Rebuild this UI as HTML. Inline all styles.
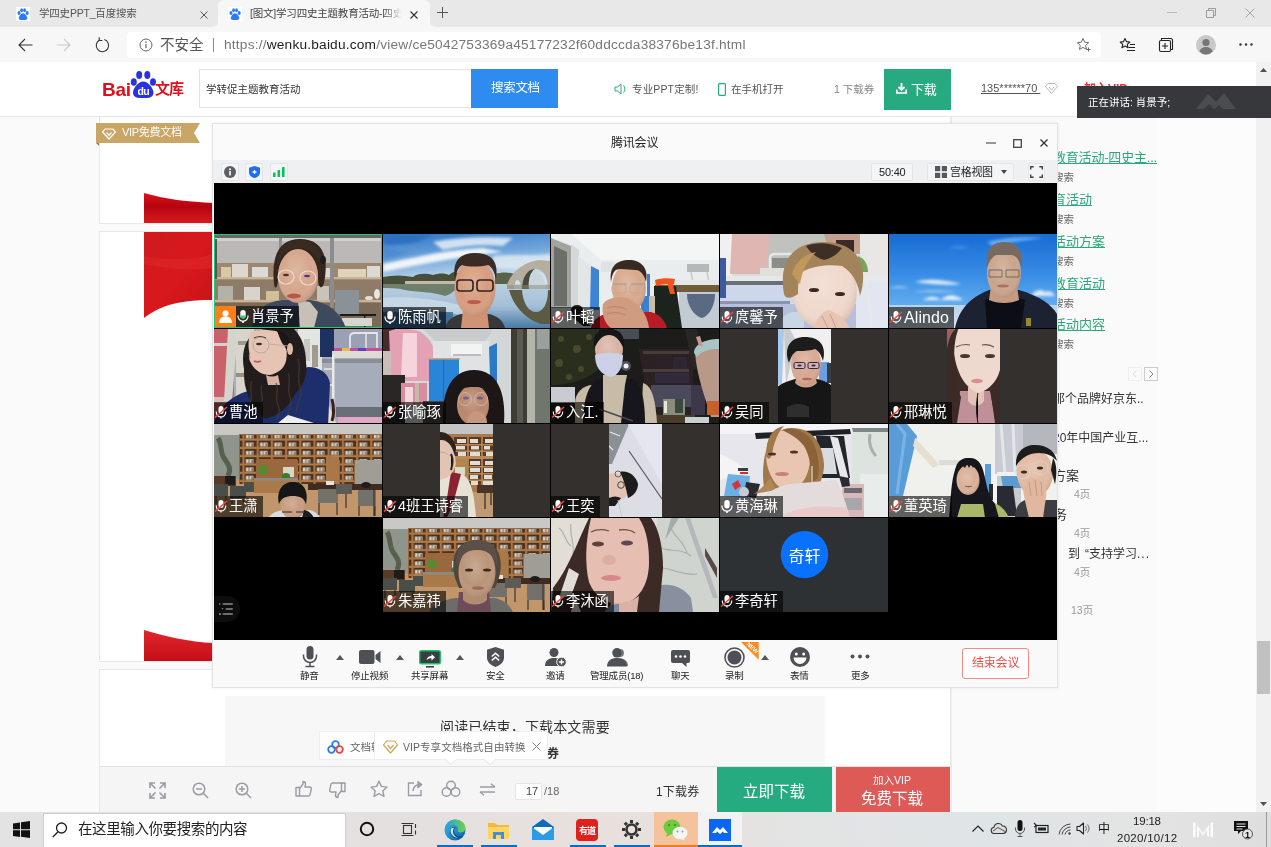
<!DOCTYPE html>
<html lang="zh-CN">
<head>
<meta charset="utf-8">
<title>腾讯会议</title>
<style>
*{box-sizing:border-box;margin:0;padding:0}
html,body{width:1271px;height:847px;overflow:hidden;background:#fafafa}
body{font-family:"Liberation Sans","Noto Sans CJK SC",sans-serif;color:#333;position:relative}
.abs{position:absolute}
.t{position:absolute;white-space:nowrap;line-height:1}
svg{position:absolute;overflow:visible}
#root{position:absolute;left:0;top:0;width:1271px;height:847px;overflow:hidden;will-change:transform}
</style>
</head>
<body>
<div id="root">
<!-- ===== Browser chrome ===== -->
<div class="abs" style="left:0;top:0;width:1271px;height:28px;background:#f7f7f7"></div>
<div class="abs" style="left:0;top:0;width:218px;height:27px;background:#e8e8e8;border-radius:0 0 5px 0"></div><div class="abs" style="left:430px;top:0;width:841px;height:27px;background:#e8e8e8;border-radius:0 0 0 5px"></div><div class="abs" style="left:214px;top:0;width:220px;height:10px;background:#e8e8e8"></div>
<div class="abs" style="left:218px;top:0;width:212px;height:28px;background:#f7f7f7;border-radius:6px 6px 0 0"></div>
<div class="abs" style="left:0;top:28px;width:1271px;height:34px;background:#f7f7f7"></div>
<!-- favicons (baidu paw) -->
<svg style="left:16px;top:7px" width="14" height="14" viewBox="0 0 14 14"><rect width="14" height="14" fill="#fff"/><g fill="#2a7afc"><ellipse cx="3" cy="6" rx="1.5" ry="2"/><ellipse cx="5.6" cy="3.2" rx="1.4" ry="2"/><ellipse cx="8.6" cy="3.2" rx="1.4" ry="2"/><ellipse cx="11.2" cy="6" rx="1.5" ry="2"/><path d="M7 6.2c2 0 4.2 3 4.2 5 0 1.600-1.600 1.800-4.200 1.800s-4.200-.2-4.200-1.800c0-2 2.200-5 4.200-5z"/></g></svg>
<svg style="left:228px;top:7px" width="14" height="14" viewBox="0 0 14 14"><rect width="14" height="14" fill="#fff"/><g fill="#2a7afc"><ellipse cx="3" cy="6" rx="1.5" ry="2"/><ellipse cx="5.6" cy="3.2" rx="1.4" ry="2"/><ellipse cx="8.6" cy="3.2" rx="1.4" ry="2"/><ellipse cx="11.2" cy="6" rx="1.5" ry="2"/><path d="M7 6.2c2 0 4.2 3 4.2 5 0 1.600-1.600 1.800-4.200 1.800s-4.200-.2-4.200-1.800c0-2 2.200-5 4.200-5z"/></g></svg>
<div class="t" style="left:39px;top:8px;font-size:10.500px;color:#555;letter-spacing:-0.2px">学四史PPT_百度搜索</div>
<div class="t" style="left:250px;top:8px;font-size:10.500px;color:#444;letter-spacing:-0.2px;width:152px;overflow:hidden;-webkit-mask-image:linear-gradient(90deg,#000 88%,transparent)">[图文]学习四史主题教育活动-四史</div>
<svg style="left:200px;top:11px" width="8" height="8" viewBox="0 0 8 8"><path d="M.5.5l7 7M7.500.5l-7 7" stroke="#555" stroke-width="1" fill="none"/></svg>
<svg style="left:410px;top:11px" width="8" height="8" viewBox="0 0 8 8"><path d="M.5.5l7 7M7.500.5l-7 7" stroke="#333" stroke-width="1.100" fill="none"/></svg>
<svg style="left:437px;top:7px" width="11" height="11" viewBox="0 0 11 11"><path d="M5.500 0v11M0 5.500h11" stroke="#555" stroke-width="1" fill="none"/></svg>
<!-- window controls -->
<svg style="left:1167px;top:12px" width="10" height="2" viewBox="0 0 10 2"><path d="M0 .5h10" stroke="#bbb" stroke-width="1"/></svg>
<svg style="left:1206px;top:8px" width="10" height="10" viewBox="0 0 10 10"><path d="M.5 2.500h7v7h-7zM2.500 2.500v-2h7v7h-2" stroke="#9a9a9a" stroke-width="1" fill="none"/></svg>
<svg style="left:1245px;top:8px" width="10" height="10" viewBox="0 0 10 10"><path d="M.5.5l9 9M9.500.5l-9 9" stroke="#a4a4a4" stroke-width="1" fill="none"/></svg>
<!-- nav buttons -->
<svg style="left:18px;top:38px" width="15" height="14" viewBox="0 0 15 14"><path d="M14.500 7H1M7 1L1 7l6 6" stroke="#333" stroke-width="1.100" fill="none"/></svg>
<svg style="left:56px;top:38px" width="15" height="14" viewBox="0 0 15 14"><path d="M.5 7H14M8 1l6 6-6 6" stroke="#cacaca" stroke-width="1.100" fill="none"/></svg>
<svg style="left:95px;top:37px" width="15" height="16" viewBox="0 0 15 16"><path d="M9.300 2.600A6.200 6.200 0 1 1 4.600 3" stroke="#333" stroke-width="1.100" fill="none"/><path d="M4.200.3v3.200h3.200" stroke="#333" stroke-width="1.100" fill="none"/></svg>
<!-- address box -->
<div class="abs" style="left:127px;top:32px;width:974px;height:26px;background:#fff;border-radius:4px"></div>
<svg style="left:139px;top:38px" width="14" height="14" viewBox="0 0 14 14"><circle cx="7" cy="7" r="6" stroke="#666" stroke-width="1" fill="none"/><path d="M7 6v4" stroke="#666" stroke-width="1.200"/><circle cx="7" cy="4.100" r=".8" fill="#666"/></svg>
<div class="t" style="left:160px;top:38px;font-size:14.500px;color:#555">不安全</div>
<div class="abs" style="left:212.500px;top:38px;width:1.500px;height:14px;background:#8c8c8c"></div>
<div class="t" style="left:224px;top:38px;font-size:13.700px;color:#777;letter-spacing:0.2px">https://<span style="color:#222">wenku.baidu.com</span>/view/ce5042753369a45177232f60ddccda38376be13f.html</div>
<!-- right toolbar icons -->
<svg style="left:1076px;top:37px" width="16" height="16" viewBox="0 0 16 16"><path d="M7 1.500l1.700 3.700 4 .5-3 2.700.8 4L7 10.400l-3.500 2 .8-4-3-2.700 4-.5z" stroke="#6a6a6a" stroke-width="1" fill="none" stroke-linejoin="round"/><path d="M12.500 10.500v4M10.500 12.500h4" stroke="#6a6a6a" stroke-width="1"/></svg>
<svg style="left:1119px;top:37px" width="17" height="16" viewBox="0 0 17 16"><path d="M6 1.500l1.400 3.100 3.400.4-2.500 2.300.7 3.400L6 9l-3 1.700.7-3.400L1.200 5l3.400-.4z" stroke="#222" stroke-width="1.100" fill="none" stroke-linejoin="round"/><path d="M11 7.500h5M9.500 10.500h6.500M8 13.500h8" stroke="#222" stroke-width="1.100"/></svg>
<svg style="left:1158px;top:37px" width="16" height="16" viewBox="0 0 16 16"><path d="M3.500 3.500v-2h9a2 2 0 0 1 2 2v9h-2" stroke="#222" stroke-width="1.100" fill="none"/><rect x="1.500" y="3.500" width="11" height="11" rx="1.500" stroke="#222" stroke-width="1.100" fill="none"/><path d="M7 6v6M4 9h6" stroke="#222" stroke-width="1.100"/></svg>
<svg style="left:1196px;top:35px" width="20" height="20" viewBox="0 0 20 20"><circle cx="10" cy="10" r="10" fill="#c9c9c9"/><circle cx="10" cy="7.500" r="3.600" fill="#777"/><path d="M3.500 16.500c1-3.500 4-4.500 6.500-4.500s5.500 1 6.500 4.500A9.500 9.500 0 0 1 10 19.500a9.500 9.500 0 0 1-6.500-3z" fill="#777"/></svg>
<svg style="left:1239px;top:43px" width="14" height="3" viewBox="0 0 14 3"><circle cx="1.500" cy="1.500" r="1.200" fill="#333"/><circle cx="7" cy="1.500" r="1.200" fill="#333"/><circle cx="12.500" cy="1.500" r="1.200" fill="#333"/></svg>
<!-- ===== Page ===== -->
<div class="abs" style="left:0;top:62px;width:1256px;height:750px;background:#fafafa"></div>
<div class="abs" style="left:951px;top:116px;width:206px;height:696px;background:#fafafa;border-left:1px solid #ececec"></div>
<div class="abs" style="left:1157px;top:116px;width:99px;height:696px;background:#fcfcfc"></div>
<!-- header -->
<div class="abs" style="left:0;top:62px;width:1256px;height:55px;background:#fff;border-bottom:1px solid #e6e6e6"></div>
<!-- baidu logo -->
<div class="t" style="left:102px;top:80px;font-size:19px;font-weight:bold;color:#e10f1b;letter-spacing:-0.3px">Bai</div>
<svg style="left:130px;top:70px" width="27" height="29" viewBox="0 0 27 29"><g fill="#2932e1"><ellipse cx="3.800" cy="12" rx="3" ry="3.800"/><ellipse cx="9.200" cy="5" rx="3" ry="4"/><ellipse cx="17.300" cy="5" rx="3" ry="4"/><ellipse cx="23" cy="12" rx="3" ry="3.800"/><path d="M13.300 11.500c4.500 0 10.200 6.500 10.200 11.200 0 4.800-4.500 5.300-10.200 5.300S3 27.500 3 22.700c0-4.700 5.800-11.200 10.300-11.200z"/></g><text x="13.300" y="24.500" font-size="10.500" font-weight="bold" fill="#fff" text-anchor="middle" font-family="Liberation Sans,sans-serif" letter-spacing="-0.5">du</text></svg>
<div class="t" style="left:155px;top:81px;font-size:15px;font-weight:bold;color:#e10f1b;letter-spacing:-1px">文库</div>
<!-- search -->
<div class="abs" style="left:199px;top:69px;width:273px;height:39px;background:#fff;border:1px solid #e3e3e3"></div>
<div class="t" style="left:206px;top:84px;font-size:10.500px;color:#333">学转促主题教育活动</div>
<div class="abs" style="left:471px;top:69px;width:87px;height:39px;background:#2e8cf0"></div>
<div class="t" style="left:491px;top:82px;font-size:12.500px;color:#fff;letter-spacing:-0.3px">搜索文档</div>
<!-- header right -->
<svg style="left:614px;top:83px" width="14" height="12" viewBox="0 0 14 12"><path d="M1 4h2.500L7 1v10L3.500 8H1z" stroke="#29a97f" stroke-width="1" fill="none" stroke-linejoin="round"/><path d="M9.500 2.500a5 5 0 0 1 0 7" stroke="#29a97f" stroke-width="1" fill="none"/></svg>
<div class="t" style="left:632px;top:84px;font-size:10.500px;color:#555;letter-spacing:0.15px">专业PPT定制!</div>
<svg style="left:718px;top:83px" width="8" height="13" viewBox="0 0 8 13"><rect x=".6" y=".6" width="6.800" height="11.800" rx="1" stroke="#29a97f" stroke-width="1.200" fill="none"/></svg>
<div class="t" style="left:731px;top:84px;font-size:10.500px;color:#555">在手机打开</div>
<div class="t" style="left:834px;top:84px;font-size:10.500px;color:#888">1 下载券</div>
<div class="abs" style="left:884px;top:69px;width:67px;height:41px;background:#27aa80"></div>
<svg style="left:896px;top:83px" width="11" height="11" viewBox="0 0 11 11"><path d="M5.500 0v6M2.500 4l3 3 3-3" stroke="#fff" stroke-width="1.800" fill="none"/><path d="M.8 6.500v3.500h9.400V6.500" stroke="#fff" stroke-width="1.600" fill="none"/></svg>
<div class="t" style="left:911px;top:83px;font-size:13px;color:#fff;letter-spacing:-0.3px">下载</div>
<div class="t" style="left:981px;top:83px;font-size:11px;color:#555;text-decoration:underline">135******70&nbsp;</div>
<svg style="left:1045px;top:83px" width="13" height="11" viewBox="0 0 13 11"><path d="M3 .5h7l2.500 3-6 7-6-7z" stroke="#bbb" stroke-width="1" fill="none"/><path d="M4 4l2.500 3L9 4" stroke="#bbb" stroke-width="1" fill="none"/></svg>
<div class="t" style="left:1084px;top:83px;font-size:12px;font-weight:bold;color:#e4393c">加入VIP</div>
<!-- scrollbar -->
<div class="abs" style="left:1256px;top:62px;width:15px;height:750px;background:#f1f1f1"></div>
<div class="abs" style="left:1257px;top:641px;width:13px;height:53px;background:#c1c1c1"></div>
<svg style="left:1260px;top:68px" width="7" height="4" viewBox="0 0 7 4"><path d="M0 4l3.500-4L7 4z" fill="#505050"/></svg>
<svg style="left:1260px;top:802px" width="7" height="4" viewBox="0 0 7 4"><path d="M0 0l3.500 4L7 0z" fill="#505050"/></svg>
<!-- doc pages -->
<div class="abs" style="left:99px;top:117px;width:852px;height:107px;background:#fff;border:1px solid #e8e8e8;border-top:none"></div>
<div class="abs" style="left:99px;top:231px;width:852px;height:431px;background:#fff;border:1px solid #e8e8e8"></div>
<div class="abs" style="left:99px;top:669px;width:852px;height:143px;background:#fff;border:1px solid #e8e8e8;border-bottom:none"></div>
<!-- VIP ribbon -->
<svg style="left:96px;top:123px" width="105" height="23" viewBox="0 0 105 23"><path d="M0 20l3 3v-3z" fill="#9b7a3d"/><path d="M0 0h104l-6 10 6 10H0z" fill="#c9a666"/><path d="M9 6h8l2.500 3-6.500 7-6.500-7z" stroke="#fff" stroke-width="1.200" fill="none"/><path d="M10.500 9.500l2.500 2.800 2.500-2.800" stroke="#fff" stroke-width="1.200" fill="none"/></svg>
<div class="t" style="left:122px;top:127px;font-size:11px;color:#fff;letter-spacing:-0.3px">VIP免费文档</div>
<!-- red flag pieces -->
<svg style="left:144px;top:193px" width="70" height="30" viewBox="0 0 70 30"><defs><linearGradient id="rf1" x1="0" y1="0" x2="0" y2="1"><stop offset="0" stop-color="#e01018"/><stop offset=".45" stop-color="#b40410"/><stop offset="1" stop-color="#d81a20"/></linearGradient></defs><path d="M0 0c20 6 45 9 70 10v20H0z" fill="url(#rf1)"/></svg>
<svg style="left:144px;top:232px" width="70" height="88" viewBox="0 0 70 88"><defs><linearGradient id="rf2" x1="0" y1="0" x2="1" y2="1"><stop offset="0" stop-color="#cf1a1e"/><stop offset=".5" stop-color="#d8181c"/><stop offset="1" stop-color="#c41418"/></linearGradient></defs><path d="M0 0h70v68c-25 0-50 2-70 18z" fill="url(#rf2)"/><path d="M0 24c25 5 50 4 70-2v14c-25 4-50 0-70-4z" fill="#e02a2a" opacity=".5"/></svg>
<svg style="left:144px;top:630px" width="70" height="31" viewBox="0 0 70 31"><defs><linearGradient id="rf3" x1="0" y1="0" x2="0" y2="1"><stop offset="0" stop-color="#e2262c"/><stop offset="1" stop-color="#c40e18"/></linearGradient></defs><path d="M0 0c20 6 45 12 70 13v18H0z" fill="url(#rf3)"/></svg>
<!-- sidebar links -->
<div class="t" style="left:1053px;top:151px;font-size:13px;color:#2aa97f;text-decoration:underline;letter-spacing:-0.2px">教育活动-四史主...</div>
<div class="t" style="left:1053px;top:172px;font-size:10.500px;color:#666">搜索</div>
<div class="t" style="left:1053px;top:193px;font-size:13px;color:#2aa97f;text-decoration:underline;letter-spacing:0px">育活动</div>
<div class="t" style="left:1053px;top:214px;font-size:10.500px;color:#666">搜索</div>
<div class="t" style="left:1053px;top:235px;font-size:13px;color:#2aa97f;text-decoration:underline;letter-spacing:0px">活动方案</div>
<div class="t" style="left:1053px;top:256px;font-size:10.500px;color:#666">搜索</div>
<div class="t" style="left:1053px;top:277px;font-size:13px;color:#2aa97f;text-decoration:underline;letter-spacing:0px">教育活动</div>
<div class="t" style="left:1053px;top:298px;font-size:10.500px;color:#666">搜索</div>
<div class="t" style="left:1053px;top:318px;font-size:13px;color:#2aa97f;text-decoration:underline;letter-spacing:0px">活动内容</div>
<div class="t" style="left:1053px;top:339px;font-size:10.500px;color:#666">搜索</div>
<div class="abs" style="left:1128px;top:367px;width:14px;height:14px;border:1px solid #eee;background:#fafafa"></div>
<div class="abs" style="left:1144px;top:367px;width:14px;height:14px;border:1px solid #ccc;background:#fafafa"></div>
<svg style="left:1132px;top:370px" width="5" height="8" viewBox="0 0 5 8"><path d="M4.500.5L1 4l3.500 3.500" stroke="#ddd" stroke-width="1" fill="none"/></svg>
<svg style="left:1149px;top:370px" width="5" height="8" viewBox="0 0 5 8"><path d="M.5.5L4 4 .5 7.500" stroke="#888" stroke-width="1" fill="none"/></svg>
<div class="t" style="left:1053px;top:393px;font-size:12px;color:#333">那个品牌好京东..</div>
<div class="t" style="left:1053px;top:432px;font-size:12px;color:#333">20年中国产业互...</div>
<div class="t" style="left:1053px;top:469px;font-size:13px;color:#333">方案</div>
<div class="t" style="left:1074px;top:489px;font-size:10.500px;color:#999">4页</div>
<div class="t" style="left:1054px;top:508px;font-size:13px;color:#333">务</div>
<div class="t" style="left:1074px;top:528px;font-size:10.500px;color:#999">4页</div>
<div class="t" style="left:1068px;top:548px;font-size:12px;color:#333">到<span style="margin-left:5px">“</span>支持学习<span style="letter-spacing:1px">...</span></div>
<div class="t" style="left:1074px;top:567px;font-size:10.500px;color:#999">4页</div>
<div class="t" style="left:1071px;top:605px;font-size:10.500px;color:#999">13页</div>
<!-- reading end box -->
<div class="abs" style="left:225px;top:696px;width:600px;height:72px;background:#f7f7f7"></div>
<div class="t" style="left:440px;top:720px;font-size:14px;color:#333;letter-spacing:0.15px">阅读已结束，下载本文需要</div>
<div class="t" style="left:547px;top:748px;font-size:12px;font-weight:bold;color:#333">券</div>
<!-- popups -->
<div class="abs" style="left:319px;top:731px;width:97px;height:29px;background:#fff;border:1px solid #eee"></div>
<svg style="left:327px;top:740px" width="17" height="14" viewBox="0 0 17 14"><circle cx="8.500" cy="4.500" r="3.300" stroke="#2b7de9" stroke-width="1.800" fill="none"/><circle cx="4.500" cy="9.500" r="3.300" stroke="#2b7de9" stroke-width="1.800" fill="none"/><circle cx="12.500" cy="9.500" r="3.300" stroke="#e8443a" stroke-width="1.800" fill="none"/></svg>
<div class="t" style="left:350px;top:742px;font-size:10.500px;color:#666">文档转换</div>
<div class="abs" style="left:374px;top:731px;width:174px;height:29px;background:#fff;border:1px solid #eee"></div>
<svg style="left:383px;top:740px" width="15" height="14" viewBox="0 0 15 14"><path d="M3.500 1h8l3 4-7 8-7-8z" stroke="#d5a556" stroke-width="1.200" fill="none" stroke-linejoin="round"/><path d="M4.500 5l3 3.500 3-3.500" stroke="#d5a556" stroke-width="1.200" fill="none"/></svg>
<div class="t" style="left:403px;top:742px;font-size:10.500px;color:#666;letter-spacing:0.05px">VIP专享文档格式自由转换</div>
<svg style="left:532px;top:742px" width="9" height="9" viewBox="0 0 9 9"><path d="M.5.5l8 8M8.500.5l-8 8" stroke="#888" stroke-width="1" fill="none"/></svg>
<!-- ===== Doc bottom bar ===== -->
<div class="abs" style="left:99px;top:766px;width:852px;height:46px;background:#f5f5f5;border-top:1px solid #e2e2e2;border-left:1px solid #e8e8e8"></div>
<svg style="left:149px;top:782px" width="17" height="17" viewBox="0 0 17 17"><g stroke="#9a9ba3" stroke-width="1.600" fill="none"><path d="M1 6V1h5M1 1l5.500 5.500M16 6V1h-5M16 1l-5.500 5.500M1 11v5h5M1 16l5.500-5.500M16 11v5h-5M16 16l-5.500-5.500"/></g></svg>
<svg style="left:192px;top:782px" width="17" height="17" viewBox="0 0 17 17"><g stroke="#9a9ba3" stroke-width="1.500" fill="none"><circle cx="7" cy="7" r="5.800"/><path d="M11.300 11.300L16 16M4 7h6"/></g></svg>
<svg style="left:235px;top:782px" width="17" height="17" viewBox="0 0 17 17"><g stroke="#9a9ba3" stroke-width="1.500" fill="none"><circle cx="7" cy="7" r="5.800"/><path d="M11.300 11.300L16 16M4 7h6M7 4v6"/></g></svg>
<svg style="left:295px;top:780px" width="18" height="17" viewBox="0 0 18 17"><g stroke="#9a9ba3" stroke-width="1.400" fill="none" stroke-linejoin="round"><path d="M1 7.500h3.500v8.500H1z"/><path d="M4.500 8.500l3.500-4.500V1.500c1.800 0 2.500 1.200 2.500 2.500l-.5 3h5c1 0 1.500.8 1.300 1.800l-1.300 6c-.2.800-.8 1.200-1.500 1.200H4.500"/></g></svg>
<svg style="left:328px;top:782px" width="18" height="17" viewBox="0 0 18 17"><g stroke="#9a9ba3" stroke-width="1.400" fill="none" stroke-linejoin="round" transform="rotate(180 9 8.500)"><path d="M1 7.500h3.500v8.500H1z"/><path d="M4.500 8.500l3.500-4.500V1.500c1.800 0 2.500 1.200 2.500 2.500l-.5 3h5c1 0 1.500.8 1.300 1.800l-1.300 6c-.2.800-.8 1.200-1.500 1.200H4.500"/></g></svg>
<svg style="left:370px;top:780px" width="18" height="18" viewBox="0 0 18 18"><path d="M9 1.200l2.400 5.200 5.600.7-4.200 3.800 1.200 5.600L9 13.700l-5 2.800 1.200-5.600L1 7.100l5.600-.7z" stroke="#9a9ba3" stroke-width="1.400" fill="none" stroke-linejoin="round"/></svg>
<svg style="left:407px;top:780px" width="17" height="17" viewBox="0 0 17 17"><g stroke="#9a9ba3" stroke-width="1.400" fill="none"><path d="M7 3H1.500v12.500H14V10"/><path d="M6 11c.5-4 3-6.500 7-6.500M10.500 1.500L14.500 4.500 10.500 8" stroke-linejoin="round"/></g><path d="M10.500 1l5 3.500-5 3.500z" fill="#9a9ba3"/></svg>
<svg style="left:441px;top:780px" width="20" height="18" viewBox="0 0 20 18"><g stroke="#9a9ba3" stroke-width="1.400" fill="none"><circle cx="10" cy="5.500" r="4.300"/><circle cx="5.500" cy="12" r="4.300"/><circle cx="14.500" cy="12" r="4.300"/></g></svg>
<svg style="left:479px;top:783px" width="17" height="13" viewBox="0 0 17 13"><g stroke="#9a9ba3" stroke-width="1.400" fill="none"><path d="M1 4h15M12 .8L16 4"/><path d="M16 9H1M5 12.200L1 9"/></g></svg>
<div class="abs" style="left:515px;top:783px;width:27px;height:17px;background:#fff;border:1px solid #e4e4e4;border-radius:2px"></div>
<div class="t" style="left:526px;top:786px;font-size:11px;color:#444">17</div>
<div class="t" style="left:544px;top:786px;font-size:11px;color:#666">/18</div>
<div class="t" style="left:656px;top:786px;font-size:12px;color:#333;letter-spacing:0.2px">1下载券</div>
<div class="abs" style="left:717px;top:767px;width:115px;height:45px;background:#26ab80"></div>
<div class="t" style="left:743px;top:784px;font-size:15.500px;color:#fff">立即下载</div>
<div class="abs" style="left:836px;top:767px;width:114px;height:45px;background:#dd5a57"></div>
<div class="t" style="left:873px;top:775px;font-size:10.500px;color:#fff">加入VIP</div>
<div class="t" style="left:861px;top:791px;font-size:15.500px;color:#fff">免费下载</div>
<!-- popup carets -->
<svg style="left:445px;top:759px" width="12" height="6" viewBox="0 0 12 6"><path d="M0 0l6 5.500L12 0" stroke="#e6e6e6" fill="#fff"/></svg>
<svg style="left:484px;top:759px" width="12" height="6" viewBox="0 0 12 6"><path d="M0 0l6 5.500L12 0" stroke="#e6e6e6" fill="#fff"/></svg>
<!-- ===== Windows taskbar ===== -->
<div class="abs" style="left:0;top:812px;width:1271px;height:35px;background:linear-gradient(90deg,#e3e3e4 0%,#e4e0e0 30%,#e8e0dc 52%,#e4e4e4 62%,#dfe4e6 78%,#e4e4e4 90%,#dedede 100%)"></div>
<svg style="left:13px;top:821px" width="17" height="17" viewBox="0 0 17 17"><path d="M0 2.400l7-1v6.800H0zM8 1.300L17 0v8.200H8zM0 9.200h7V16l-7-1zM8 9.200h9V17l-9-1.300z" fill="#111"/></svg>
<div class="abs" style="left:43px;top:813px;width:303px;height:34px;background:#fff;border:1px solid #d0d0d0;border-bottom:none"></div>
<svg style="left:52px;top:822px" width="16" height="16" viewBox="0 0 16 16"><circle cx="9.500" cy="6" r="5" stroke="#222" stroke-width="1.300" fill="none"/><path d="M6 9.800L.8 15" stroke="#222" stroke-width="1.300"/></svg>
<div class="t" style="left:78px;top:822px;font-size:14.500px;color:#222;letter-spacing:-0.4px">在这里输入你要搜索的内容</div>
<svg style="left:359px;top:821px" width="16" height="16" viewBox="0 0 16 16"><circle cx="8" cy="8" r="6.200" stroke="#111" stroke-width="2" fill="none"/></svg>
<svg style="left:401px;top:822px" width="17" height="15" viewBox="0 0 17 15"><g stroke="#333" stroke-width="1.100" fill="none"><rect x="2.500" y="3.500" width="8" height="8"/><path d="M.5 1.500h12M.5 13.500h12M14.500 2v4M14.500 8.500v4"/></g></svg>
<!-- edge -->
<svg style="left:444px;top:819px" width="22" height="22" viewBox="0 0 22 22"><defs><linearGradient id="eg1" x1="0" y1="0" x2="1" y2="1"><stop offset="0" stop-color="#35c1f1"/><stop offset="1" stop-color="#0c59a4"/></linearGradient><linearGradient id="eg2" x1="0" y1="0" x2="1" y2="0"><stop offset="0" stop-color="#2c9ddb"/><stop offset="1" stop-color="#6ad34a"/></linearGradient></defs><circle cx="11" cy="11" r="10.500" fill="url(#eg1)"/><path d="M1 10C2 4 6.500.5 11 .5c6 0 10.500 4 10.500 8.500 0 3-2.500 4.500-5 4.500-2 0-3-1-3-2 0-.6.500-1 .5-2 0-1.500-1.500-3.500-4.500-3.500C5.500 6 2 8 1 10z" fill="url(#eg2)"/><path d="M8 8.500c-2 1.500-2.500 4-1.500 6.500 1.200 3 4.500 5 8 4.500 2-.3 4-1.500 5-3-1.500 1-4 1.500-6 .5-2.500-1.200-4-3.500-3.500-6 .2-1 .8-1.800 1.500-2.500z" fill="#0b4f94"/><path d="M7.500 9c-1.500 2-1.200 5 1 7.500 1.500 1.600 3.500 2.500 6 2.500-3.500-1-6-4-5.500-7.500.1-1 .5-1.800 1-2.500z" fill="#e8f4fb" opacity=".9"/></svg>
<!-- explorer -->
<svg style="left:487px;top:820px" width="23" height="20" viewBox="0 0 23 20"><path d="M1 3h7l2 2h12v13H1z" fill="#f5b93b"/><path d="M1 7h21v12H1z" fill="#fcd663"/><path d="M6 12h11v7H6z" fill="#3a8ee6"/><path d="M9 15h5v4H9z" fill="#fcd663"/></svg>
<!-- mail -->
<svg style="left:532px;top:819px" width="22" height="21" viewBox="0 0 22 21"><path d="M0 8L11 0l11 8v13H0z" fill="#0f6cbd"/><path d="M2 8h18v8H2z" fill="#fff"/><path d="M0 8l11 8 11-8v13H0z" fill="#2b9be8"/></svg>
<!-- youdao -->
<svg style="left:576px;top:819px" width="22" height="22" viewBox="0 0 22 22"><rect width="22" height="22" rx="4" fill="#e0201c"/><text x="11" y="15" font-size="9" font-weight="bold" fill="#fff" text-anchor="middle" font-family="Noto Sans CJK SC,sans-serif" letter-spacing="-1">有道</text></svg>
<!-- settings gear -->
<svg style="left:621px;top:819px" width="21" height="21" viewBox="0 0 21 21"><g fill="none" stroke="#333"><circle cx="10.500" cy="10.500" r="5" stroke-width="2.600"/><g stroke-width="3"><path d="M10.500 1v3M10.500 17v3M1 10.500h3M17 10.500h3M3.800 3.800l2.100 2.100M15.100 15.100l2.100 2.100M3.800 17.200l2.100-2.100M15.100 5.900l2.100-2.100"/></g></g></svg>
<!-- wechat -->
<div class="abs" style="left:654px;top:812px;width:44px;height:35px;background:#f5c39b"></div>
<svg style="left:663px;top:819px" width="25" height="21" viewBox="0 0 25 21"><ellipse cx="9" cy="8" rx="8.500" ry="7.500" fill="#6ccb3f"/><path d="M4 14l-1 4 4.500-2.500z" fill="#6ccb3f"/><ellipse cx="17" cy="14" rx="7.500" ry="6.300" fill="#f4f4f4"/><path d="M21 19l1 2.500-4-1.500z" fill="#f4f4f4"/><circle cx="6" cy="6" r="1" fill="#3b8a1c"/><circle cx="12" cy="6" r="1" fill="#3b8a1c"/><circle cx="14.500" cy="12.500" r=".9" fill="#999"/><circle cx="19.500" cy="12.500" r=".9" fill="#999"/></svg>
<!-- tencent meeting -->
<div class="abs" style="left:698px;top:812px;width:44px;height:35px;background:#f2f2f4"></div>
<svg style="left:709px;top:819px" width="22" height="22" viewBox="0 0 22 22"><rect width="22" height="22" fill="#0a66f5"/><path d="M3 14l5-6 3 3 3-3 5 6h-4l-1-1.500-3 2.500-3-2.500L7 14z" fill="#fff"/></svg>
<!-- underlines -->
<div class="abs" style="left:437px;top:845px;width:36px;height:2px;background:#0a6cd1"></div>
<div class="abs" style="left:481px;top:845px;width:36px;height:2px;background:#0a6cd1"></div>
<div class="abs" style="left:570px;top:845px;width:36px;height:2px;background:#0a6cd1"></div>
<div class="abs" style="left:614px;top:845px;width:36px;height:2px;background:#0a6cd1"></div>
<div class="abs" style="left:654px;top:845px;width:44px;height:2px;background:#f07c1c"></div>
<div class="abs" style="left:698px;top:845px;width:44px;height:2px;background:#0a6cd1"></div>
<!-- tray -->
<svg style="left:972px;top:825px" width="12" height="7" viewBox="0 0 12 7"><path d="M.5 6.500L6 1l5.500 5.500" stroke="#222" stroke-width="1.200" fill="none"/></svg>
<svg style="left:991px;top:823px" width="16" height="11" viewBox="0 0 16 11"><path d="M3.500 10.500a3 3 0 0 1-.5-6A4.500 4.500 0 0 1 11.500 3a3.800 3.800 0 0 1 1 7.500z" stroke="#333" stroke-width="1.100" fill="#ddd"/><path d="M2 8l5-3.500 7 4" stroke="#333" stroke-width=".8" fill="none"/></svg>
<svg style="left:1015px;top:820px" width="10" height="17" viewBox="0 0 10 17"><rect x="2.500" y="0" width="5" height="11" rx="2.500" fill="#111"/><path d="M.5 7.500v1.500a4.500 4.500 0 0 0 9 0V7.500M5 13.500V16M2.500 16.500h5" stroke="#555" stroke-width="1" fill="none"/></svg>
<svg style="left:1033px;top:822px" width="16" height="12" viewBox="0 0 16 12"><rect x="3" y="3.500" width="12" height="7" stroke="#222" stroke-width="1.200" fill="none"/><rect x="5" y="5.500" width="8" height="3" fill="#222"/><path d="M1 1l3 3M1 5l2-1" stroke="#222" stroke-width="1.100"/></svg>
<svg style="left:1058px;top:823px" width="14" height="12" viewBox="0 0 14 12"><g stroke="#444" stroke-width="1" fill="none"><path d="M1 11.500A12 12 0 0 1 12.500 1"/><path d="M4 11.500A9 9 0 0 1 12.500 4"/><path d="M7 11.500A6 6 0 0 1 12.500 7"/></g><circle cx="11.500" cy="10.500" r="1.200" fill="#444"/></svg>
<svg style="left:1076px;top:822px" width="16" height="13" viewBox="0 0 16 13"><path d="M1 4.500h2.500L7.500 1v11L3.500 8.500H1z" stroke="#222" stroke-width="1.100" fill="none" stroke-linejoin="round"/><path d="M9.500 4a4 4 0 0 1 0 5M11.500 2.500a6.500 6.500 0 0 1 0 8" stroke="#666" stroke-width="1" fill="none"/></svg>
<div class="t" style="left:1098px;top:823px;font-size:12px;color:#111">中</div>
<div class="t" style="left:1133px;top:816px;font-size:11.500px;color:#222;letter-spacing:-0.2px">19:18</div>
<div class="t" style="left:1117px;top:833px;font-size:11.500px;color:#222;letter-spacing:0.28px">2020/10/12</div>
<svg style="left:1193px;top:822px" width="20" height="15" viewBox="0 0 20 15"><path d="M0 0l2.500 1v14H0zM4 3l6 8 6-8v12l-2-1V8l-4 5.500L6 8v7H4zM17.500 1L20 0v15h-2.500z" fill="#fbfbfb"/></svg>
<svg style="left:1234px;top:821px" width="20" height="19" viewBox="0 0 20 19"><path d="M0 0h14v10H7l-3 3v-3H0z" fill="#111"/><path d="M2.500 3h9M2.500 5.500h9M2.500 8h6" stroke="#e4e4e4" stroke-width="1"/><circle cx="13.500" cy="13" r="5" fill="#e4e4e4" stroke="#333" stroke-width=".8"/><text x="13.500" y="16.500" font-size="9" font-weight="bold" fill="#111" text-anchor="middle" font-family="Liberation Sans,sans-serif">1</text></svg>
<div class="abs" style="left:1266px;top:812px;width:1px;height:35px;background:#999"></div>
<!-- ===== Tencent Meeting window ===== -->
<div class="abs" style="left:212px;top:123px;width:846px;height:565px;background:#fafafa;border:1px solid #e3e3e3;box-shadow:0 0 3px rgba(0,0,0,.08)"></div>
<div class="t" style="left:611px;top:137px;font-size:12px;color:#222;letter-spacing:-0.2px">腾讯会议</div>
<svg style="left:986px;top:142px" width="10" height="2" viewBox="0 0 10 2"><path d="M0 1h10" stroke="#555" stroke-width="1.200"/></svg>
<svg style="left:1013px;top:139px" width="9" height="9" viewBox="0 0 9 9"><rect x=".7" y=".7" width="7.600" height="7.600" stroke="#444" stroke-width="1.300" fill="none"/></svg>
<svg style="left:1040px;top:139px" width="8" height="8" viewBox="0 0 8 8"><path d="M.5.5l7 7M7.500.5l-7 7" stroke="#333" stroke-width="1.300" fill="none"/></svg>
<!-- toolbar -->
<div class="abs" style="left:213px;top:160px;width:844px;height:23px;background:#eff0f2"></div>
<div class="abs" style="left:221px;top:163px;width:18px;height:18px;background:#f4f5f6;border:1px solid #e3e4e6;border-radius:2px"></div>
<svg style="left:224px;top:166px" width="12" height="12" viewBox="0 0 12 12"><circle cx="6" cy="6" r="6" fill="#5b5e63"/><rect x="5.200" y="5" width="1.600" height="4.500" fill="#fff"/><circle cx="6" cy="3.200" r="1" fill="#fff"/></svg>
<div class="abs" style="left:245px;top:163px;width:18px;height:18px;background:#f4f5f6;border:1px solid #e3e4e6;border-radius:2px"></div>
<svg style="left:249px;top:166px" width="11" height="12" viewBox="0 0 11 12"><path d="M5.500 0L11 1.800v4.500c0 3-2.500 5-5.500 5.700C2.500 11.300 0 9.300 0 6.300V1.800z" fill="#1a6dff"/><path d="M5.500 4v4M3.500 6h4" stroke="#fff" stroke-width="1.300"/></svg>
<div class="abs" style="left:270px;top:163px;width:18px;height:18px;background:#f4f5f6;border:1px solid #e3e4e6;border-radius:2px"></div>
<svg style="left:273px;top:167px" width="12" height="10" viewBox="0 0 12 10"><rect x="0" y="5.500" width="2.600" height="4.500" rx=".6" fill="#0fc05e"/><rect x="4.500" y="3" width="2.600" height="7" rx=".6" fill="#0fc05e"/><rect x="9" y="0" width="2.600" height="10" rx=".6" fill="#0fc05e"/></svg>
<div class="abs" style="left:871px;top:163px;width:42px;height:18px;background:#f4f5f6;border:1px solid #e3e4e6;border-radius:2px"></div>
<div class="t" style="left:879px;top:167px;font-size:11px;color:#222;letter-spacing:-0.2px">50:40</div>
<div class="abs" style="left:927px;top:163px;width:87px;height:18px;background:#f4f5f6;border:1px solid #e3e4e6;border-radius:2px"></div>
<svg style="left:935px;top:166px" width="12" height="12" viewBox="0 0 12 12"><g fill="#54575c"><rect width="5.200" height="5.200"/><rect x="6.800" width="5.200" height="5.200"/><rect y="6.800" width="5.200" height="5.200"/><rect x="6.800" y="6.800" width="5.200" height="5.200"/></g></svg>
<div class="t" style="left:950px;top:167px;font-size:11px;color:#222;letter-spacing:-0.3px">宫格视图</div>
<svg style="left:1001px;top:170px" width="6" height="4" viewBox="0 0 6 4"><path d="M0 0h6L3 4z" fill="#444"/></svg>
<div class="abs" style="left:1028px;top:163px;width:17px;height:18px;background:#f4f5f6;border:1px solid #e3e4e6;border-radius:2px"></div>
<svg style="left:1030px;top:166px" width="13" height="12" viewBox="0 0 13 12"><path d="M.7 3.500V.7h3M9.300.7h3v2.800M12.300 8.500v2.800h-3M3.700 11.300h-3V8.500" stroke="#444" stroke-width="1.400" fill="none"/></svg>
<!-- video area -->
<div class="abs" style="left:214px;top:183px;width:843px;height:457px;background:#000"></div>
<!-- bottom toolbar -->
<div class="abs" style="left:213px;top:640px;width:844px;height:47px;background:#f9f9f9"></div>
<svg width="0" height="0" style="position:absolute">
<defs>
<filter id="b1" x="-5%" y="-5%" width="110%" height="110%"><feGaussianBlur stdDeviation="0.5"/></filter>
<filter id="b2" x="-10%" y="-10%" width="120%" height="120%"><feGaussianBlur stdDeviation="1.6"/></filter>
<filter id="b4" x="-20%" y="-20%" width="140%" height="140%"><feGaussianBlur stdDeviation="4"/></filter>
<radialGradient id="fsh" cx=".45" cy=".4" r=".68"><stop offset="0" stop-color="#fff" stop-opacity=".2"/><stop offset=".55" stop-color="#fff" stop-opacity="0"/><stop offset="1" stop-color="#50281a" stop-opacity=".3"/></radialGradient>
<pattern id="shelf" width="14.200" height="8.300" patternUnits="userSpaceOnUse">
<rect width="14.200" height="8.300" fill="#4e321e"/>
<rect x="3.500" y="2" width="7.500" height="4" fill="#d6d0c6"/>
<rect x="6" y="2" width="1.200" height="4" fill="#8a7868"/>
<rect x="9" y="2.800" width="1.200" height="3.200" fill="#6a5648"/>
<rect x="0" y="6.200" width="14.200" height="2.100" fill="#b07c4a"/>
<rect x="0" y="0" width="2.200" height="8.300" fill="#aa7442"/>
</pattern>
<g id="lib">
<rect width="168" height="94" fill="#c0966a"/>
<rect width="168" height="11" fill="#c9c8c4"/>
<rect y="11" width="26" height="44" fill="#8f958c"/>
<path d="M4 14c4 6 2 14 6 20s8 10 4 18" stroke="#3c4a34" stroke-width="5" fill="none" opacity=".7"/>
<rect x="25" y="10" width="143" height="50" fill="#9a683c"/>
<rect x="26" y="11" width="142" height="25" fill="url(#shelf)"/>
<rect x="26" y="36" width="16" height="24" fill="url(#shelf)"/>
<rect x="84" y="36" width="28" height="24" fill="url(#shelf)"/>
<rect x="126" y="36" width="14" height="24" fill="url(#shelf)"/>
<rect x="43" y="35" width="40" height="22" fill="#9a683c"/>
<rect x="112" y="33" width="13" height="27" fill="#a87848"/>
<rect x="141" y="36" width="27" height="24" fill="#a09c96"/>
<rect x="69" y="43" width="11" height="10" fill="#d4d8c8"/>
<ellipse cx="49" cy="46" rx="5" ry="5" fill="#5a8a30"/>
<ellipse cx="72" cy="52" rx="4" ry="3" fill="#3f7a28"/>
<rect x="40" y="55" width="44" height="14" fill="#a9794a"/>
<rect x="40" y="54" width="44" height="2.500" fill="#8c8a84"/>
<rect y="52" width="22" height="10" fill="#5a3a24"/>
<rect x="11" y="52" width="10" height="9" fill="#1e1c1a"/>
<path d="M0 60h14v12H0zM16 62h16v12H16zM30 58h10v10H30z" fill="#4b4e48"/>
<path d="M2 72v8M12 72v8M18 74v6M30 74v6" stroke="#33302c" stroke-width="1"/>
<rect x="94" y="60" width="74" height="6" fill="#3e2c22"/>
<rect x="104" y="65" width="20" height="14" rx="1" fill="#74706a"/>
<rect x="144" y="66" width="18" height="16" rx="1" fill="#74706a"/>
<rect x="122" y="60" width="16" height="10" fill="#5e5a56"/>
<path d="M105 79v12M123 79v12M145 82v10M161 82v10M132 70v14M160 66v26" stroke="#3a3430" stroke-width="1.200"/>
<rect x="112" y="57" width="8" height="4" fill="#e4e2de"/>
<ellipse cx="152" cy="61" rx="5" ry="3" fill="#1e1c1c"/>
</g>
<g id="micoff"><rect x="3.500" y="0" width="5" height="8" rx="2.500" fill="#fff"/><path d="M1.300 5.500v.7a4.700 4.700 0 0 0 9.400 0v-.7" stroke="#fff" stroke-width="1.100" fill="none"/><path d="M6 11v1.500" stroke="#fff" stroke-width="1.200"/><path d="M0 11.500L12 1" stroke="#f5483e" stroke-width="1.500"/></g>
<g id="micon"><rect x="3.300" y="0" width="5.400" height="8.500" rx="2.700" fill="#fff"/><path d="M1 5.500v.7a5 5 0 0 0 10 0v-.7" stroke="#fff" stroke-width="1.200" fill="none"/><path d="M6 11v2" stroke="#fff" stroke-width="1.600"/></g>
</defs>
</svg>
<style>
.tile{position:absolute;width:168px;height:94px;overflow:hidden;background:#222}
.tile>svg{position:absolute;left:0;top:0}
.lb{position:absolute;left:0;bottom:0;height:21px;background:rgba(0,0,0,.6);color:#fff;font-size:14.300px;line-height:21px;padding:0 5px 0 15px;white-space:nowrap}
.lb svg{position:absolute;left:1px;top:4px}
</style>
<div class="tile" style="left:214px;top:234px;width:168px;height:94px"><svg width="168" height="94" viewBox="0 0 168 94"><rect width="168" height="94" fill="#a08c76"/>
<rect width="168" height="29" fill="#bab9b7"/>
<rect width="168" height="4" fill="#6a6866"/>
<rect y="4" width="168" height="3" fill="#d0cfcd"/>
<rect y="29" width="168" height="15" fill="#9c8870"/>
<rect y="43" width="168" height="2.500" fill="#c9b494"/>
<rect y="45.500" width="168" height="20" fill="#8f7c68"/>
<rect y="66" width="168" height="2.500" fill="#c9b494"/>
<rect y="68.500" width="168" height="26" fill="#7c6a58"/>
<rect x="7" y="33" width="10" height="10" fill="#d8c8a4"/><rect x="18" y="30" width="16" height="13" fill="#dcd8d0"/><rect x="38" y="33" width="16" height="10" fill="#dcdad6"/>
<rect x="4" y="52" width="15" height="14" fill="#b4b0aa"/><rect x="30" y="53" width="16" height="13" fill="#d8d4cc"/><rect x="52" y="57" width="13" height="9" fill="#d2c09a"/>
<rect x="108" y="34" width="8" height="9" fill="#dcdad6"/><rect x="124" y="35" width="28" height="8" fill="#e0d4b8"/><rect x="153" y="32" width="13" height="11" fill="#dcdad6"/>
<rect x="103" y="52" width="12" height="14" fill="#c8c4bc"/>
<rect x="65" y="4" width="3" height="40" fill="#8e8e8e"/><rect x="116" y="4" width="4" height="70" fill="#8c8c8c"/><rect x="1" y="5" width="2" height="40" fill="#555"/>
<rect x="121" y="56" width="24" height="24" fill="#8a9298"/>
<rect x="126" y="80" width="36" height="2" fill="#1c1c1c"/><rect x="150" y="82" width="1.500" height="12" fill="#1c1c1c"/><rect x="128" y="84" width="30" height="8" fill="#d8d6d0"/>
<ellipse cx="163" cy="60" rx="3" ry="5" fill="#e8e6e0"/><ellipse cx="155" cy="64" rx="4" ry="2" fill="#e0ded8"/>
<g filter="url(#b1)">
<path d="M38 94c2-18 14-26 30-28h28c18 2 30 12 36 28z" fill="#3d4a5c"/>
<path d="M84 66l12 2 8 10-4 16H86z" fill="#c8c0b4"/>
<path d="M60 50c-3-30 6-45 26-45s30 14 24 44c-2 8-6 4-6-4 0-16-6-26-20-26s-20 10-20 26c0 8-3 12-4 5z" fill="#35261f"/>
<ellipse cx="84" cy="42" rx="20" ry="27" fill="#d6a68c"/><ellipse cx="84" cy="42" rx="20" ry="27" fill="url(#fsh)"/>
<path d="M62 36c0-22 10-30 24-30s22 8 22 28c-6-14-12-20-24-20s-18 8-22 22z" fill="#3a2a22"/>
<ellipse cx="109" cy="26" rx="3" ry="4" fill="#1c1a1a"/>
<ellipse cx="80" cy="62" rx="7" ry="2.500" fill="#b8584e"/>
<ellipse cx="72" cy="43" rx="8" ry="7" fill="none" stroke="#ecd8d0" stroke-width="1.200"/><ellipse cx="94" cy="44" rx="8" ry="7" fill="none" stroke="#ecd8d0" stroke-width="1.200"/>
<ellipse cx="72" cy="41" rx="3" ry="1.200" fill="#4a3028"/><ellipse cx="93" cy="42" rx="3" ry="1.200" fill="#4a3890"/>
</g></svg><div style="position:absolute;left:1px;bottom:1px;width:21px;height:21px;background:#ff7f16"><svg width="13" height="13" viewBox="0 0 13 13" style="left:4px;top:4px"><circle cx="6.500" cy="3.500" r="3" fill="#fff"/><path d="M0 13c0-5 3-6.500 6.500-6.500S13 8 13 13z" fill="#fff"/></svg></div><div class="lb" style="left:22px;bottom:1px"><svg width="12" height="13" viewBox="0 0 12 13"><use href="#micon"/><path d="M3.300 5.500h5.400v.3a2.700 2.700 0 0 1-5.400 0z" fill="#2fd36c"/></svg>肖景予</div><div style="position:absolute;left:0;top:0;width:168px;height:94px;border:1px solid #23c873"></div></div>
<div class="tile" style="left:383px;top:234px;width:167px;height:94px"><svg width="168" height="94" viewBox="0 0 168 94"><defs><linearGradient id="sky2" x1="0" y1="0" x2=".3" y2="1"><stop offset="0" stop-color="#2f74c6"/><stop offset=".5" stop-color="#6ea4da"/><stop offset="1" stop-color="#cfe0ee"/></linearGradient>
<linearGradient id="wat2" x1="0" y1="0" x2="0" y2="1"><stop offset="0" stop-color="#b9cfdf"/><stop offset=".5" stop-color="#a3c0d8"/><stop offset="1" stop-color="#4a7aa4"/></linearGradient></defs>
<rect width="168" height="50" fill="url(#sky2)"/>
<g filter="url(#b2)"><path d="M0 30c30-6 60-14 100-16l20 4c-40 4-80 12-120 20z" fill="#f0f4f8"/><path d="M50 8c20-4 50-6 80-4l-10 8c-20-2-40 0-60 4z" fill="#dfeaf4" opacity=".9"/><path d="M110 22c20-2 40 0 58-2v14c-20 0-40 2-58 0z" fill="#e4ecf2" opacity=".8"/><path d="M0 0h50c-10 8-30 12-50 10z" fill="#2f6fc0"/><path d="M0 12c10 4 20 6 30 6L0 26z" fill="#4a88d0" opacity=".8"/></g>
<rect y="50" width="168" height="44" fill="url(#wat2)"/>
<g filter="url(#b1)">
<path d="M0 43c10-2 20-2 30 0 4-4 14-4 20-2 6-2 12-2 16 0 4-4 8-4 10 0v9H0z" fill="#46503a"/>
<path d="M112 40c6-2 14-2 20 0v10h-20z" fill="#5a6248"/>
<rect x="22" y="47" width="60" height="3.500" fill="#c4b8a8"/>
<path d="M0 50h76c-2 6-8 10-14 12-10-4-30-4-40-6-8-2-16-2-22-2z" fill="#5c6c50" opacity=".8"/>
<path d="M124 55v-4c4-12 16-23 32-25l12 1v28h-3c0-13-5-20-13-20s-13 9-13 20h-1c0-6-2-9-3.500-9s-3.500 3-3.500 9z" fill="#b6ae9e"/>
<path d="M139 55c0-11 5-20 13-20-5 3-7 11-6 20z" fill="#4c483c"/>
<path d="M146 55c-1-9 1-15 6-18 6 2 10 8 11 18z" fill="#c9d6de"/>
<path d="M126 56c4 14 14 28 32 34h10V56h-3c0 14-5 22-12 22s-13-8-14-22z" fill="#5c5a42"/>
<path d="M124 51h44v4h-44z" fill="#8c8a74" opacity=".5"/>
<path d="M0 64c20-2 50 0 80 8v10c-30-8-60-10-80-8z" fill="#d4e0ea" opacity=".7"/>
<path d="M0 78h70v16H0z" fill="#356694" opacity=".8"/>
<path d="M62 94c2-8 8-12 16-14h28c8 2 14 6 16 14z" fill="#38383a"/>
<path d="M80 76h24l2 18H78z" fill="#cf9474"/>
<ellipse cx="92" cy="54" rx="20.500" ry="29" fill="#d89c7c"/><ellipse cx="92" cy="54" rx="20.500" ry="29" fill="url(#fsh)"/>
<path d="M72 46c-3-18 4-27 20-27s24 8 21 26c-2-8-4-12-8-14-8 2-20 2-26 0-4 2-6 8-7 15z" fill="#3a2a26"/>
<rect x="74" y="46" width="16" height="11" rx="3" fill="none" stroke="#2a2424" stroke-width="1.600"/><rect x="94" y="46" width="16" height="11" rx="3" fill="none" stroke="#2a2424" stroke-width="1.600"/>
<ellipse cx="91" cy="68" rx="7" ry="2" fill="#b85c50"/>
</g></svg><div class="lb"><svg width="12" height="13" viewBox="0 0 12 13"><use href="#micon"/></svg>陈雨帆</div></div>
<div class="tile" style="left:551px;top:234px;width:168px;height:94px"><svg width="168" height="94" viewBox="0 0 168 94"><rect width="168" height="94" fill="#e9edee"/>
<g filter="url(#b1)">
<path d="M20 0h148v26H50z" fill="#f4f6f6"/>
<path d="M0 4l20 8v62H0z" fill="#a2a4a0"/><path d="M3 12l13 6v54H3z" fill="#6c6e6a"/>
<path d="M20 10l8 6v58h-8z" fill="#d4d8d8"/>
<path d="M27 22l16 12v42H27z" fill="#e2e6e6"/>
<path d="M40 32l8 4v40h-9z" fill="#3e84d4"/>
<rect x="50" y="28" width="14" height="10" fill="#dfe3e4"/>
<rect x="136" y="30" width="22" height="8" fill="#b4b8b8"/><path d="M140 38l2 10M156 38l2 10" stroke="#c8caca" stroke-width="1.500"/>
<rect x="104" y="46" width="64" height="5" fill="#e4e6e6"/>
<rect x="104" y="51" width="64" height="7" fill="#6e5c3c"/>
<rect x="128" y="58" width="40" height="36" fill="#c2cad2"/>
<path d="M136 60h28c0 12-6 22-13 24-8-2-15-12-15-24z" fill="#5a6a82"/>
<path d="M103 52h22l6 42h-28z" fill="#1a221e"/>
<path d="M104 46c6-2 14-2 20-1l-1 5c-6 0-12 0-18 2z" fill="#f0521c"/><path d="M116 46c4-2 6 0 6 4l2 10h-5l-2-8z" fill="#f0521c"/>
<rect x="96" y="40" width="3" height="40" fill="#3a80d0"/><rect x="90" y="62" width="10" height="18" fill="#3a80d0"/>
<rect x="98" y="62" width="6" height="18" fill="#c8bca8"/>
<path d="M40 94c2-10 10-14 24-16h36c8 2 14 8 16 16z" fill="#b61e28"/>
<ellipse cx="78" cy="54" rx="17" ry="24" fill="#d9a88c"/><ellipse cx="78" cy="54" rx="17" ry="24" fill="url(#fsh)"/>
<path d="M60 48c-2-16 6-22 18-22s20 8 17 22c-2-8-6-12-10-12-8 0-16-2-20 0-3 2-4 6-5 12z" fill="#392922"/>
<path d="M52 70c4-6 14-8 24-6 10 4 20 14 22 30H60c-6-4-10-14-8-24z" fill="#d09c80"/><path d="M56 74c6-2 14-2 20 2M56 80c6-2 12-2 18 1" stroke="#b88468" stroke-width="1" fill="none"/>
<path d="M62 50h14M80 50h14" stroke="#a09890" stroke-width="1"/><rect x="61" y="51" width="14" height="8" rx="2" fill="none" stroke="#b0a8a0" stroke-width=".8"/><rect x="79" y="51" width="14" height="8" rx="2" fill="none" stroke="#b0a8a0" stroke-width=".8"/>
<ellipse cx="26" cy="76" rx="6" ry="5" fill="#1c1c1c"/><path d="M24 78l16 14h-8L20 82z" fill="#1c1c1c"/>
</g></svg><div class="lb"><svg width="12" height="13" viewBox="0 0 12 13"><use href="#micoff"/></svg>叶韬</div></div>
<div class="tile" style="left:720px;top:234px;width:168px;height:94px"><svg width="168" height="94" viewBox="0 0 168 94"><rect width="168" height="94" fill="#dcdcdc"/>
<g filter="url(#b1)">
<rect width="12" height="46" fill="#f0f0f0"/>
<path d="M12 0h40l-4 40H10z" fill="#e0b6b2"/>
<path d="M50 0h64v40H46z" fill="#c0c2be"/>
<path d="M104 0h36v20h-30z" fill="#c4a090"/><rect x="116" y="6" width="18" height="12" fill="#3a2c2a"/>
<rect x="140" width="28" height="46" fill="#e9e7e5"/>
<path d="M138 22c6 2 10 8 10 16h-10z" fill="#7aa45c"/>
<path d="M50 40V24c0-3 2-4 5-4h20" stroke="#e4e6e8" stroke-width="2.500" fill="none"/>
<rect x="52" y="24" width="20" height="16" fill="#8a8e8a"/>
<rect x="40" y="34" width="28" height="8" fill="#e0e0da"/>
<rect y="42" width="168" height="5" fill="#e6e8ea"/>
<rect y="47" width="70" height="4" fill="#6a6e74"/>
<rect y="51" width="168" height="18" fill="#cdd6ea"/><rect y="67" width="70" height="3" fill="#8a94b0"/>
<rect y="70" width="168" height="24" fill="#b6c0da"/>
<rect x="136" y="47" width="32" height="47" fill="#e2e6f0"/>
<path d="M146 44l6 50" stroke="#e8e8e8" stroke-width="2"/>
<rect x="0" y="24" width="6" height="40" fill="#3a5aa0"/>
<path d="M60 94c0-8 4-14 12-16h12v16z" fill="#c8d6e6"/>
<ellipse cx="105" cy="58" rx="32" ry="38" fill="#f0d8cc"/><ellipse cx="105" cy="58" rx="32" ry="38" fill="url(#fsh)"/>
<path d="M64 60c-6-34 10-52 40-52 32 0 46 22 36 54-2-14-8-24-18-30-14-2-30 0-40 6-4 6-4 16-4 22-6 4-12 6-14 0z" fill="#a3845a"/>
<path d="M86 12c10-4 24-4 36 2-4 6-10 10-18 12-8-2-14-8-18-14z" fill="#3e2e26"/>
<path d="M72 40c4-14 14-20 24-22-8 8-14 18-16 32z" fill="#c0985c"/>
<ellipse cx="94" cy="56" rx="5" ry="2" fill="#3a2820"/><ellipse cx="120" cy="60" rx="5" ry="2" fill="#3a2820"/>
<path d="M94 94c2-10 8-16 14-18 8 2 16 8 22 18z" fill="#e8c4b4"/>
<path d="M102 82l6 12M110 80l6 14" stroke="#c89c8c" stroke-width="1"/>
</g></svg><div class="lb"><svg width="12" height="13" viewBox="0 0 12 13"><use href="#micoff"/></svg>庹馨予</div></div>
<div class="tile" style="left:889px;top:234px;width:168px;height:94px"><svg width="168" height="94" viewBox="0 0 168 94"><defs><linearGradient id="sky5" x1="0" y1="0" x2="0" y2="1"><stop offset="0" stop-color="#186cd2"/><stop offset=".45" stop-color="#3a8ee6"/><stop offset=".75" stop-color="#62acee"/><stop offset=".76" stop-color="#b8d4ea"/><stop offset="1" stop-color="#d4e2ee"/></linearGradient></defs>
<rect width="168" height="94" fill="url(#sky5)"/>
<g filter="url(#b2)"><path d="M26 48c14-4 30-2 46 2-16 2-32 0-46-2z" fill="#dcecf8"/><path d="M34 66c6-4 12-4 18 0 6-6 14-6 22 0H34z" fill="#f0f6fa"/><path d="M0 54c8-2 14-2 20 0H0zM24 58c14-2 30-2 44 0z" fill="#bcd8f0"/><path d="M98 8c16-4 36-6 56-4-14 2-34 4-50 8z" fill="#6aaef0"/><path d="M142 62c4-6 10-8 14-4 4-2 8 0 10 4z" fill="#e0ecf6"/><path d="M60 14c8-2 14-2 20 0z" fill="#5aa2ec"/></g>
<g filter="url(#b1)">
<path d="M66 94c4-18 14-30 34-38h30c20 6 32 14 38 24v14z" fill="#1f2132"/>
<path d="M96 66c6-4 34-4 40 0l-4 28h-34z" fill="#0e0e12"/>
<path d="M102 52h26l2 14c-8 4-22 4-30 0z" fill="#c49c84"/>
<ellipse cx="115" cy="39" rx="17" ry="25" fill="#caa48c"/><ellipse cx="115" cy="39" rx="17" ry="25" fill="url(#fsh)"/>
<path d="M98 34c-2-18 4-26 17-26s20 8 18 26c-2-8-6-12-10-13-6 0-12 0-16 0-4 2-7 6-9 13z" fill="#786a60"/>
<path d="M100 36h13v7h-13zM117 36h13v7h-13z" fill="none" stroke="#6a625c" stroke-width=".9"/>
<ellipse cx="114" cy="52" rx="6" ry="1.500" fill="#a87060"/>
<rect x="137" y="84" width="5" height="8" fill="#b8a428" opacity=".8"/>
</g></svg><div class="lb"><svg width="12" height="13" viewBox="0 0 12 13"><use href="#micoff"/></svg><span style="font-size:16px;letter-spacing:0.1px">Alindo</span></div></div>
<div class="tile" style="left:214px;top:329px;width:168px;height:94px"><svg width="168" height="94" viewBox="0 0 168 94"><rect width="168" height="94" fill="#a6acba"/>
<g filter="url(#b1)">
<rect width="20" height="94" fill="#c8646c"/><rect x="0" y="14" width="18" height="3" fill="#d8d0cc"/><rect x="0" y="68" width="18" height="6" fill="#d8c0b8"/>
<path d="M14 0h10l-6 72h-8z" fill="#d4d4cc"/>
<rect x="22" width="18" height="72" fill="#d8d6cc"/><rect x="24" y="12" width="14" height="4" fill="#9c988c"/><rect x="22" y="44" width="16" height="4" fill="#9c8c7c"/>
<rect x="84" width="24" height="42" fill="#e4e4e0"/><rect x="90" y="10" width="6" height="22" fill="#c8c8c4"/><rect x="98" y="16" width="6" height="22" fill="#a09c90"/>
<rect x="106" width="14" height="28" fill="#1e3060"/>
<rect x="120" width="48" height="22" fill="#9ca0b4"/>
<path d="M136 22V8c0-3 2-4 5-4h22v18" stroke="#e6e6e6" stroke-width="1.800" fill="none"/><path d="M152 4v18" stroke="#e6e6e6" stroke-width="1.500"/>
<rect x="120" y="19" width="48" height="4" fill="#c050a0"/><rect x="128" y="19" width="8" height="4" fill="#e0c040"/><rect x="144" y="19" width="8" height="4" fill="#6040c0"/>
<rect x="118" y="22" width="50" height="7" fill="#dcdcd2"/>
<rect x="108" y="30" width="60" height="4" fill="#8a8e98"/>
<rect x="118" y="26" width="2.500" height="60" fill="#eaeaea"/><path d="M110 40h10M112 56h8" stroke="#eaeaea" stroke-width="1.500"/>
<rect x="122" y="78" width="46" height="10" fill="#6a6e78"/><rect x="124" y="88" width="44" height="6" fill="#e0a8c4"/>
<path d="M114 74l8 20h-8l-4-18z" fill="#e8e0d4"/><path d="M118 70c2 8 2 16 0 22" stroke="#3a2020" stroke-width="3"/>
<path d="M0 94c4-14 14-24 28-30l30-10 36-16c12 0 20 6 22 16l-2 44z" fill="#1e2e6c"/>
<path d="M30 40c-4-20 4-40 24-40h26c8 8 12 20 12 34 2 10-2 22-10 30-6 10-12 20-30 26-10-6-16-16-20-30-2-6-2-14-2-20z" fill="#231c1a"/>
<path d="M36 4c4-4 24-4 32 0 4 8 6 18 4 28-2 8-8 12-16 14-8 0-14-4-18-10-2-4-4-6-2-10-2-6-2-14 0-22z" fill="#e6c4b4"/>
<path d="M62 0c8 2 14 8 16 18l-2 12c-2-6-4-12-8-16-2-4-4-10-6-14z" fill="#1a1615"/>
<ellipse cx="76" cy="20" rx="3" ry="6" fill="#deb8a8"/>
<circle cx="47" cy="16" r="8" fill="none" stroke="#b8aca4" stroke-width="1"/><path d="M55 15l20 2" stroke="#b8aca4" stroke-width=".8"/>
<ellipse cx="45" cy="15" rx="3" ry="1.300" fill="#3a2a24"/><path d="M40 9c4-2 8-2 12 0" stroke="#4a3830" stroke-width="1.200" fill="none"/>
<path d="M36 24c-1 2-1 4 1 5" stroke="#c89c8c" stroke-width="1" fill="none"/>
<path d="M52 46c4 2 8 2 12 0l2 10H54z" fill="#d8b4a4"/>
<g stroke="#4a3a32" stroke-width="1.400" fill="none" opacity=".7"><path d="M38 52c-4 8 2 14-2 22s2 12 0 18"/><path d="M48 56c-3 8 3 14-1 22s1 10 1 14"/><path d="M62 54c4 8-2 14 2 22s-2 12 0 16"/><path d="M74 44c4 8-2 16 2 24s-4 14-2 22"/><path d="M84 30c4 10-2 18 2 28s-4 16-4 26"/></g>
<path d="M40 32c2 1 5 1 7 0" stroke="#b86060" stroke-width="1.800"/>
<path d="M64 94l10-8 26 8z" fill="#eeeef0"/>
</g></svg><div class="lb"><svg width="12" height="13" viewBox="0 0 12 13"><use href="#micoff"/></svg>曹池</div></div>
<div class="tile" style="left:383px;top:329px;width:167px;height:94px"><svg width="168" height="94" viewBox="0 0 168 94"><rect width="168" height="94" fill="#d6dada"/>
<g filter="url(#b1)">
<path d="M40 0h72l-10 12H52z" fill="#c8cccc"/>
<rect x="50" y="12" width="56" height="60" fill="#dfe3e3"/>
<rect x="68" y="15" width="31" height="12" rx="1" fill="#f2f4f4"/><rect x="70" y="25" width="28" height="2" fill="#b8bcbc"/>
<rect x="0" width="12" height="24" fill="#4a2a2c"/>
<path d="M6 2c10-4 22-2 30 0 6 4 12 10 14 16v34H8z" fill="#e4a0b4"/>
<path d="M20 4h14v44H18z" fill="#f6d4dc"/>
<rect y="22" width="8" height="24" fill="#c8c0b8"/>
<rect y="46" width="22" height="48" fill="#2a2628"/>
<rect x="18" y="54" width="26" height="24" fill="#d88ca0"/><rect x="22" y="58" width="8" height="18" fill="#f0d8dc"/><rect x="32" y="54" width="4" height="24" fill="#c8b8a8"/>
<rect x="46" y="30" width="30" height="42" fill="#2a84d8"/><rect x="60" y="30" width="1" height="42" fill="#1c6cbc"/><rect x="45" y="29" width="32" height="1.500" fill="#c8a878"/>
<rect x="40" y="72" width="40" height="22" fill="#4a4644"/>
<rect x="108" width="24" height="94" fill="#d2d6d6"/>
<path d="M106 18l8-4v60h-6z" fill="#2a7ac8"/>
<rect x="128" width="22" height="94" fill="#3c3c36"/><rect x="134" width="6" height="94" fill="#5a5a52"/>
<rect x="144" width="10" height="94" fill="#b4b4a8"/>
<rect x="152" width="16" height="94" fill="#70746e"/><rect x="154" y="0" width="12" height="20" fill="#9aa09c"/>
<path d="M60 94c-2-30 8-53 31-53s32 22 30 53z" fill="#1c1516"/>
<ellipse cx="90" cy="76" rx="16" ry="20" fill="#b8866c"/><ellipse cx="90" cy="76" rx="16" ry="20" fill="url(#fsh)"/>
<path d="M68 66c2-16 10-24 23-24s22 8 22 24c-6-6-12-8-22-8s-18 2-23 8z" fill="#1c1516"/>
<circle cx="82" cy="70" r="6.500" fill="none" stroke="#c8b8a8" stroke-width=".9"/><circle cx="98" cy="70" r="6.500" fill="none" stroke="#c8b8a8" stroke-width=".9"/>
<ellipse cx="83" cy="69" rx="3" ry="1.500" fill="#4a3aa0" opacity=".6"/><ellipse cx="97" cy="69" rx="3" ry="1.500" fill="#4a3aa0" opacity=".6"/>
<path d="M84 94c0-8 4-12 10-12s10 4 10 12z" fill="#c8967c"/>
</g></svg><div class="lb"><svg width="12" height="13" viewBox="0 0 12 13"><use href="#micoff"/></svg>张喻琢</div></div>
<div class="tile" style="left:551px;top:329px;width:168px;height:94px"><svg width="168" height="94" viewBox="0 0 168 94"><rect width="168" height="94" fill="#1c1c1a"/>
<g filter="url(#b1)">
<path d="M0 0h48v40c-10 10-30 16-48 16z" fill="#2c2e1c"/>
<g fill="#5a5c34" opacity=".6"><circle cx="10" cy="10" r="3"/><circle cx="26" cy="20" r="4"/><circle cx="8" cy="34" r="4"/><circle cx="30" cy="40" r="3"/><circle cx="18" cy="48" r="3"/><circle cx="38" cy="8" r="3"/></g>
<rect y="58" width="24" height="16" fill="#c8ccd0"/>
<rect x="60" y="0" width="28" height="10" fill="#4a4e58"/>
<path d="M88 20h54v74H100z" fill="#2c2420"/>
<rect x="92" y="22" width="46" height="3" fill="#4a3c38"/><rect x="92" y="40" width="46" height="3" fill="#4a3e40"/>
<rect x="104" y="26" width="16" height="12" fill="#2a2028"/><rect x="122" y="28" width="14" height="12" fill="#2e2630"/>
<rect x="104" y="44" width="34" height="10" fill="#302c3c"/>
<rect x="100" y="56" width="40" height="22" fill="#4c485c"/><rect x="140" y="56" width="14" height="30" fill="#3c384a"/>
<rect x="112" y="70" width="22" height="16" fill="#8a8c7c"/><rect x="113" y="72" width="3" height="12" fill="#e8e8d0"/><rect x="124" y="70" width="8" height="14" fill="#3a4a3c"/>
<rect x="104" y="86" width="40" height="8" fill="#4a3c2c"/>
<path d="M134 0h12l6 40h-10z" fill="#2a2826"/>
<path d="M144 24c0-8 10-12 24-12v76h-8c-6-20-14-40-16-64z" fill="#b89888"/>
<path d="M143 24c0-8 10-14 25-14v10c-10 0-18 2-22 8z" fill="#a8c4c4"/>
<path d="M145 8l4-1 3 10h-4z" fill="#c89890"/>
<rect x="156" y="72" width="12" height="14" fill="#c8602c"/>
<rect x="134" y="88" width="24" height="6" fill="#c8d0d0"/>
<path d="M24 74c0-10 8-18 18-18l-6 38H24z" fill="#c8bca8"/><path d="M92 54c6 2 12 8 14 40H90z" fill="#c8bca8"/>
<path d="M32 94c0-24 6-40 16-44h34c8 4 12 20 12 44z" fill="#15161a"/>
<path d="M52 46h24l-2 10 -4 38H52z" fill="#c8bca8"/>
<path d="M44 20c-4-14 4-20 14-20s18 6 14 22l-2 16H48z" fill="#141414"/>
<ellipse cx="58" cy="20" rx="14" ry="17" fill="#d8b4a4"/><ellipse cx="58" cy="20" rx="14" ry="17" fill="url(#fsh)"/>
<path d="M44 18c-2-12 4-18 14-18s16 6 14 18c-4-8-8-12-14-12s-10 4-14 12z" fill="#141414"/>
<path d="M44 26c8-3 20-3 28 0 0 12-4 20-12 22-10-2-16-10-16-22z" fill="#cdd1e8"/>
<circle cx="75" cy="37" r="2.500" fill="#fff"/><circle cx="75" cy="37" r="5" fill="#c8d0f0" opacity=".3"/>
<path d="M48 80l34 12" stroke="#4a4a4a" stroke-width="1.500"/>
</g></svg><div class="lb"><svg width="12" height="13" viewBox="0 0 12 13"><use href="#micoff"/></svg>入江.</div></div>
<div class="tile" style="left:720px;top:329px;width:168px;height:94px"><svg width="168" height="94" viewBox="0 0 168 94"><rect width="168" height="94" fill="#33302e"/>
<svg x="58" y="0" width="53" height="94" viewBox="57 0 53 94" style="position:static;overflow:hidden">
<rect x="57" width="53" height="94" fill="#f0f0f0"/>
<g filter="url(#b1)">
<path d="M57 0h6l-2 56h-4z" fill="#a8c8ec"/><path d="M63 0h6l6 12-10 44z" fill="#c8ccd0"/>
<rect x="98" y="33" width="10" height="22" fill="#6aa0e0"/><rect x="106" y="34" width="4" height="20" fill="#3a3e44"/>
<path d="M54 94V60c6-6 14-8 20-10h22c8 2 12 4 16 8v36z" fill="#171717"/>
<path d="M76 46h18l2 8c-6 6-16 6-22 0z" fill="#d0a088"/>
<ellipse cx="85" cy="35" rx="15" ry="21" fill="#d8a890"/><ellipse cx="85" cy="35" rx="15" ry="21" fill="url(#fsh)"/>
<path d="M68 34c-6-16 2-26 16-26s22 8 18 24c-2-6-4-10-8-12-6 2-14 2-18 2-4 2-6 6-8 12z" fill="#1c1a1a"/>
<rect x="73" y="33.500" width="11" height="6" rx="1.500" fill="#c8b8e0" fill-opacity=".55" stroke="#2e2a3c" stroke-width="1"/><rect x="87" y="33.500" width="11" height="6" rx="1.500" fill="#c8b8e0" fill-opacity=".55" stroke="#2e2a3c" stroke-width="1"/><ellipse cx="78.500" cy="36.500" rx="2.200" ry="1" fill="#3a2a24"/><ellipse cx="92.500" cy="36.500" rx="2.200" ry="1" fill="#3a2a24"/>
<ellipse cx="86" cy="50" rx="5" ry="1.300" fill="#b86858"/>
<path d="M66 78c8-4 16-4 22 0v10H66z" fill="#2e2e2e"/>
</g></svg></svg><div class="lb"><svg width="12" height="13" viewBox="0 0 12 13"><use href="#micoff"/></svg>吴同</div></div>
<div class="tile" style="left:889px;top:329px;width:168px;height:94px"><svg width="168" height="94" viewBox="0 0 168 94"><rect width="168" height="94" fill="#33302e"/>
<svg x="58" y="0" width="53" height="94" viewBox="57 0 53 94" style="position:static;overflow:hidden">
<rect x="57" width="53" height="94" fill="#3c2c28"/>
<g filter="url(#b1)">
<path d="M57 0h10l-4 40-6 10z" fill="#a06058"/>
<path d="M70 62h30l6 32H66z" fill="#c09098"/>
<path d="M78 58h16v14c-4 6-12 6-16 0z" fill="#e4c4b8"/>
<path d="M63 8c0-8 4-12 8-12h40v40c-2 14-10 24-22 28-14-4-26-22-26-56z" fill="#efd8ce"/>
<path d="M57 20c2-12 6-20 12-22-4 10-6 24-4 40 0 12 2 22 6 30l-4 26H57z" fill="#3a2a26"/>
<path d="M111 44c-2 10-6 18-10 22l4 28h6z" fill="#3a2a26"/>
<ellipse cx="75" cy="27" rx="5" ry="2" fill="#4a3830"/><ellipse cx="100" cy="27" rx="5" ry="2" fill="#4a3830"/>
<ellipse cx="87" cy="52" rx="6" ry="2.200" fill="#d89090"/>
<path d="M66 18c4-2 10-3 14-2M92 16c4-1 8 0 12 2" stroke="#6a5048" stroke-width="1.200" fill="none"/>
<path d="M88 64c-2 10-2 20 0 30" stroke="#1c1818" stroke-width="1"/>
</g></svg></svg><div class="lb"><svg width="12" height="13" viewBox="0 0 12 13"><use href="#micoff"/></svg>邢琳悦</div></div>
<div class="tile" style="left:214px;top:424px;width:168px;height:93px"><svg width="168" height="94" viewBox="0 0 168 94"><use href="#lib"/>
<g filter="url(#b1)">
<path d="M54 94c4-6 12-8 18-8h22c6 0 10 4 12 8z" fill="#d8dce4"/>
<ellipse cx="79" cy="82" rx="12" ry="13" fill="#c89c80"/><ellipse cx="79" cy="82" rx="12" ry="13" fill="url(#fsh)"/>
<path d="M65 80c-3-14 4-22 14-22s16 8 13 22c-2-6-6-8-13-8s-12 2-14 8z" fill="#141414"/>
<path d="M68 88h10M82 88h10" stroke="#2a2a2a" stroke-width="1.200"/>
<path d="M90 86c4 0 8 4 10 8H88z" fill="#1c1c20"/>
</g></svg><div class="lb"><svg width="12" height="13" viewBox="0 0 12 13"><use href="#micoff"/></svg>王潇</div></div>
<div class="tile" style="left:383px;top:424px;width:167px;height:93px"><svg width="168" height="94" viewBox="0 0 168 94"><rect width="168" height="94" fill="#33302e"/>
<svg x="57" y="0" width="53" height="94" viewBox="57 0 53 94" style="position:static;overflow:hidden">
<rect x="57" width="53" height="94" fill="#c09a72"/>
<rect x="57" width="53" height="10" fill="#c4c4c4"/>
<rect x="57" y="10" width="53" height="58" fill="#a87a4c"/>
<g fill="#5a3a24"><rect x="71" y="13" width="13" height="19"/><rect x="86" y="13" width="12" height="19"/><rect x="100" y="13" width="10" height="19"/><rect x="86" y="35" width="12" height="26"/><rect x="100" y="35" width="10" height="26"/></g>
<g fill="#e0dcd6"><rect x="74" y="15" width="9" height="4"/><rect x="87" y="15" width="8" height="4"/><rect x="102" y="15" width="8" height="4"/><rect x="73" y="22" width="9" height="3.500"/><rect x="88" y="22" width="8" height="3.500"/><rect x="101" y="22" width="6" height="3.500"/><rect x="75" y="28" width="8" height="4"/><rect x="87" y="28" width="10" height="4"/><rect x="103" y="28" width="7" height="4"/><rect x="87" y="37" width="10" height="4"/><rect x="102" y="37" width="8" height="4"/><rect x="87" y="44" width="10" height="4"/><rect x="101" y="44" width="9" height="4"/><rect x="87" y="51" width="8" height="4"/><rect x="101" y="51" width="8" height="4"/><rect x="88" y="57" width="7" height="4"/><rect x="100" y="57" width="10" height="4"/></g>
<g fill="#b88a58"><rect x="71" y="20" width="39" height="1.500"/><rect x="71" y="26.500" width="39" height="1.500"/><rect x="71" y="32" width="39" height="3"/><rect x="86" y="42" width="24" height="1.500"/><rect x="86" y="49" width="24" height="1.500"/><rect x="86" y="55.500" width="24" height="1.500"/></g>
<rect x="72" y="35" width="13" height="20" fill="#b4844e"/><rect x="72" y="43" width="10" height="8" fill="#d8dcc8"/>
<rect x="94" y="61" width="16" height="8" fill="#4a3428"/><path d="M102 69v16M108 69v12" stroke="#4a4038" stroke-width="1.500"/>
<g filter="url(#b1)">
<path d="M57 52c8-4 16-4 22-2 8 4 12 16 14 44H57z" fill="#e6e2d6"/>
<path d="M68 48l10 2-8 30-6 14h-4l4-20z" fill="#8c2232"/>
<path d="M57 10c6 0 12 6 14 14l2 16c-2 8-6 12-10 14l-6 2z" fill="#e2c4b4"/>
<path d="M57 8c8 0 14 6 16 16l-1 8c-2-6-4-12-8-14-2-2-5-2-7-2z" fill="#2e201c"/>
<path d="M68 30c2 4 2 10 0 16" stroke="#2e201c" stroke-width="2"/>
<path d="M57 28c4 0 8 2 10 4" stroke="#b8a89c" stroke-width=".8" fill="none"/>
</g></svg></svg><div class="lb"><svg width="12" height="13" viewBox="0 0 12 13"><use href="#micoff"/></svg>4班王诗睿</div></div>
<div class="tile" style="left:551px;top:424px;width:168px;height:93px"><svg width="168" height="94" viewBox="0 0 168 94"><rect width="168" height="94" fill="#33302e"/>
<svg x="58" y="0" width="53" height="94" viewBox="57 0 53 94" style="position:static;overflow:hidden">
<rect x="57" width="53" height="94" fill="#dddde6"/>
<g filter="url(#b1)">
<path d="M57 0h20L60 40h-3z" fill="#8a9094"/><path d="M58 8l10 4M57 22l4 4" stroke="#e8ecec" stroke-width="1.200"/>
<path d="M76 0h34v60z" fill="#e6e6f0"/>
<path d="M77 27l33 48" stroke="#5a5a60" stroke-width="1.200"/>
<path d="M57 50c6-2 12 0 16 4 4 6 4 14 0 20l-8 2-8-2z" fill="#e2c4b4"/>
<path d="M68 48c8-2 16 4 18 12 0 6-4 12-10 14-2-10-4-18-8-26z" fill="#1c1a1c"/>
<path d="M57 74c4-2 8-2 12 0l-6 8h-6z" fill="#1c1c20"/>
<circle cx="66" cy="50" r="3" fill="none" stroke="#4a4a4a" stroke-width=".8"/><circle cx="69" cy="61" r="3.300" fill="none" stroke="#3a3a3a" stroke-width=".9"/>
<path d="M66 76l4 18" stroke="#c8c8d0" stroke-width="1"/>
</g></svg></svg><div class="lb"><svg width="12" height="13" viewBox="0 0 12 13"><use href="#micoff"/></svg>王奕</div></div>
<div class="tile" style="left:720px;top:424px;width:168px;height:93px"><svg width="168" height="94" viewBox="0 0 168 94"><rect width="168" height="94" fill="#e6e6ec"/>
<g filter="url(#b1)">
<path d="M0 0h168v10H0z" fill="#f4f4f8"/>
<path d="M0 30c10 4 20 10 28 18L0 56z" fill="#f4f4f4"/>
<path d="M35 9l95-4 1 5-95 5z" fill="#1e2226"/>
<path d="M96 12h28l6 42h-28z" fill="#24262a"/>
<path d="M97 24h16l4 26H99z" fill="#d8dce0"/><path d="M110 12l8 2 12 46h-8z" fill="#e8e8ec"/>
<path d="M132 4h36v4h-35z" fill="#7a8a82"/>
<rect x="132" y="8" width="36" height="86" fill="#dde3df"/><path d="M150 10c-2 10 2 18 6 22" stroke="#a8b0b0" stroke-width="3" fill="none"/><rect x="140" y="50" width="28" height="44" fill="#e8ecea"/>
<path d="M8 50l22 2-2 22-24-2z" fill="#6ab0e0"/><path d="M12 60l6-4 3 6-6 4z" fill="#d83040"/>
<path d="M18 44h10v3H18z" fill="#3a3a3a"/><path d="M20 48h8v2h-8z" fill="#c83030"/>
<path d="M26 58l14 2-4 14-12-2z" fill="#2a2c30"/><ellipse cx="24" cy="68" rx="5" ry="5" fill="#c8ccd0"/>
<rect x="122" y="60" width="22" height="34" fill="#d8b8b8"/><rect x="124" y="64" width="18" height="5" fill="#6a6a70"/><rect x="124" y="74" width="18" height="12" fill="#a8a6ac"/>
<path d="M119 52l10 2 1 8-8 1z" fill="#2a2c30"/>
<path d="M44 64c-4-30 4-60 28-60 20 0 30 14 32 36 0 8-2 16-6 22l-20 4z" fill="#a07848"/>
<path d="M46 30c0-16 8-24 20-24s22 10 24 28c0 14-6 26-16 32-6 2-12 0-18-6-6-8-10-18-10-30z" fill="#e9c6b2"/>
<path d="M46 32c0-18 6-28 18-30-6 6-10 16-12 28-2 6-4 6-6 2z" fill="#a07848"/>
<path d="M62 6c12-4 26 2 32 14 4 10 6 22 4 34l-8 6c2-14 0-28-6-38-6-8-14-12-22-16z" fill="#8c6438"/>
<path d="M34 70c6-4 12-10 16-16l6 12z" fill="#b08858"/>
<ellipse cx="52" cy="30" rx="4" ry="1.500" fill="#4a3428"/><ellipse cx="74" cy="28" rx="4" ry="1.500" fill="#4a3428"/>
<ellipse cx="62" cy="50" rx="7" ry="2" fill="#c88078"/>
<path d="M92 42v22" stroke="#f4f4f4" stroke-width="1"/>
<path d="M30 94c6-18 20-30 40-34l46-4c6 10 10 24 14 38z" fill="#e4dcdc"/>
<path d="M60 94c10-10 40-14 66-10l4 10z" fill="#e8c8c8"/>
</g></svg><div class="lb"><svg width="12" height="13" viewBox="0 0 12 13"><use href="#micon"/></svg>黄海琳</div></div>
<div class="tile" style="left:889px;top:424px;width:168px;height:93px"><svg width="168" height="94" viewBox="0 0 168 94"><rect width="168" height="94" fill="#f0f0ec"/>
<g filter="url(#b1)">
<path d="M0 0h18l10 12-14 60H0z" fill="#5a9cd8"/><path d="M8 0l8 10-8 60" stroke="#7ab4e4" stroke-width="3" fill="none"/>
<path d="M26 14l24 26-6 4-20-22z" fill="#e4e0d0"/>
<rect x="50" y="36" width="22" height="5" fill="#dcdcd8"/>
<rect x="106" y="0" width="30" height="50" fill="#c8ccd2"/><path d="M112 0l4 50M124 0l2 50" stroke="#e4e6ea" stroke-width="3"/>
<rect x="134" y="0" width="34" height="30" fill="#b4b8be"/>
<rect x="108" y="48" width="60" height="3" fill="#f0f0f0"/>
<rect x="96" y="40" width="6" height="32" fill="#5a9cd8"/>
<rect x="104" y="50" width="4" height="44" fill="#f4f4f4"/>
<rect x="108" y="52" width="24" height="42" fill="#c8ccd0"/>
<path d="M112 52h20l2 12h-20z" fill="#5a9cd0"/>
<path d="M108 62h16l4 30h-20z" fill="#2a2c30"/><rect x="100" y="60" width="4" height="16" fill="#2a2a2a"/>
<path d="M62 94c2-10 10-16 20-18h14c12 2 20 8 24 18z" fill="#a8b868"/>
<path d="M60 94c2-20 2-36 6-48 4-10 8-12 14-12s12 4 14 12c4 14 4 24 12 34l4 14H96l-2-14H72l-4 14z" fill="#16161a"/>
<ellipse cx="79" cy="56" rx="11.500" ry="15" fill="#d8b098"/><ellipse cx="79" cy="56" rx="11.500" ry="15" fill="url(#fsh)"/>
<path d="M66 50c0-12 6-16 14-16s13 4 13 16c-2-4-4-6-6-6l-1-4-2 4-2-4-2 4-2-4-2 4-3-3-1 3c-2 0-4 2-6 6z" fill="#16161a"/>
<path d="M76 62c2 1 5 1 7 0" stroke="#9a6858" stroke-width="1"/>
<path d="M126 94c0-10 4-16 10-18h32v18z" fill="#3a3c40"/>
<ellipse cx="146" cy="49" rx="18" ry="23" fill="#e2baa2"/><ellipse cx="146" cy="49" rx="18" ry="23" fill="url(#fsh)"/>
<path d="M127 42c-1-13 7-21 19-21s20 6 22 16c-4-5-10-8-18-8-10 0-17 4-23 13z" fill="#1e1a1a"/>
<path d="M164 34c4 6 4 16 2 26l-4-14z" fill="#1e1a1a"/>
<circle cx="134" cy="48" r="7" fill="none" stroke="#d8d0cc" stroke-width="1"/><circle cx="152" cy="44" r="7" fill="none" stroke="#d8d0cc" stroke-width="1"/>
<ellipse cx="135" cy="48" rx="3" ry="1.500" fill="#3a2a24"/><ellipse cx="151" cy="44" rx="3" ry="1.500" fill="#3a2a24"/>
<path d="M134 62c2-6 6-8 10-8l10 2c4 4 4 14 2 24l-2 14h-14c-2-10-6-22-6-32z" fill="#e0b8a0"/>
<path d="M140 58l2 14M146 56l2 16M152 58l1 14" stroke="#c09078" stroke-width=".8"/>
</g></svg><div class="lb"><svg width="12" height="13" viewBox="0 0 12 13"><use href="#micoff"/></svg>董英琦</div></div>
<div class="tile" style="left:383px;top:518px;width:167px;height:94px"><svg width="168" height="94" viewBox="0 0 168 94"><use href="#lib"/>
<g filter="url(#b1)">
<path d="M46 94c4-8 14-12 26-14h40c8 2 14 6 18 14z" fill="#6c6c6a"/>
<path d="M76 74h30l2 20H74z" fill="#6e4c5a"/>
<path d="M80 70h24v12c-6 6-18 6-24 0z" fill="#b08c70"/>
<path d="M72 60c-6-24 4-38 22-38s28 14 22 38l-4 10H76z" fill="#50463e"/>
<ellipse cx="94" cy="54" rx="18.500" ry="26" fill="#ba9478"/><ellipse cx="94" cy="54" rx="18.500" ry="26" fill="url(#fsh)"/>
<path d="M74 48c-2-18 6-26 20-26s22 8 20 26c-4-10-8-16-20-16s-16 6-20 16z" fill="#5c5046"/>
<ellipse cx="86" cy="52" rx="4" ry="1.500" fill="#3a2a24"/><ellipse cx="104" cy="52" rx="4" ry="1.500" fill="#3a2a24"/>
<ellipse cx="95" cy="70" rx="6" ry="1.800" fill="#9a6a5c"/>
</g></svg><div class="lb"><svg width="12" height="13" viewBox="0 0 12 13"><use href="#micoff"/></svg>朱嘉祎</div></div>
<div class="tile" style="left:551px;top:518px;width:168px;height:94px"><svg width="168" height="94" viewBox="0 0 168 94"><rect width="168" height="94" fill="#e2ded6"/>
<g filter="url(#b1)">
<rect x="106" width="62" height="94" fill="#d0d4ce"/>
<g stroke="#9aa09c" stroke-width="1.200" fill="none" opacity=".7"><path d="M8 10c6 4 6 14 12 18M20 6c-2 10 4 20 2 30M110 30c10 4 20 0 30 8M120 10c4 10 14 14 16 26M112 50c12 2 24 8 34 6"/></g>
<path d="M120 0l8 0-14 22z" fill="#a8aca8"/>
<path d="M134 0h5l28 80h-5z" fill="#b4b8bc"/><path d="M154 30l12 20v10l-12-22z" fill="#5a4a48"/>
<path d="M100 70c14-6 30-4 40 10l2 14h-46z" fill="#8890a0"/>
<path d="M40 0h60c8 10 12 30 12 50l-4 44H30c-10-20-10-60 10-94z" fill="#3a2a26"/>
<path d="M38 0c-10 20-20 50-36 70l-2 24h20c8-30 16-60 30-94z" fill="#3a2a26"/>
<path d="M18 50l10 6-8 22-12 2z" fill="#e2ded6"/>
<path d="M40 0h48c8 12 10 28 10 44 0 20-8 36-24 42-16 2-30-6-36-22-4-16-4-40 2-64z" fill="#e6beb2"/>
<path d="M60 84c10 2 20 0 28-6l-2 16H58z" fill="#dcb0a4"/>
<path d="M54 94c2-6 8-8 14-8v8z" fill="#7888a0"/>
<ellipse cx="47" cy="26" rx="6" ry="2.500" fill="#5a4238"/><ellipse cx="76" cy="25" rx="6" ry="2.500" fill="#5a4a58"/>
<path d="M40 14c6-3 12-3 18-1M68 12c6-1 12 0 16 3" stroke="#6a5048" stroke-width="1.300" fill="none"/>
<ellipse cx="60" cy="60" rx="10" ry="3" fill="#d88888"/>
<ellipse cx="58" cy="42" rx="7" ry="5" fill="#dcae9e"/>
</g></svg><div class="lb"><svg width="12" height="13" viewBox="0 0 12 13"><use href="#micoff"/></svg>李沐函</div></div>
<div class="tile" style="left:720px;top:518px;width:168px;height:94px"><svg width="168" height="94" viewBox="0 0 168 94"><rect width="168" height="94" fill="#2e3134"/>
<circle cx="84.500" cy="36.600" r="23.700" fill="#0872ff"/>
<text x="84.500" y="43.600" font-size="16" fill="#fff" text-anchor="middle" font-family="Liberation Sans,Noto Sans CJK SC,sans-serif">奇轩</text></svg><div class="lb"><svg width="12" height="13" viewBox="0 0 12 13"><use href="#micoff"/></svg>李奇轩</div></div>
<div class="abs" style="left:214px;top:596px;width:26px;height:26px;border-radius:0 13px 13px 0;background:#0d0d0d"></div><svg style="left:219px;top:603px" width="14" height="12" viewBox="0 0 14 12"><g fill="#8a8a8a"><path d="M0 0l2 1-2 1z"/><rect x="3.500" y=".2" width="10.500" height="1.600" rx=".8"/><path d="M2.500 5l2 .2-1 1.600z"/><rect x="6.500" y="5.200" width="7.500" height="1.600" rx=".8"/><rect x="0" y="10.200" width="2" height="1.600"/><rect x="3.500" y="10.200" width="10.500" height="1.600" rx=".8"/></g></svg>
<!-- meeting bottom toolbar icons -->
<svg style="left:302px;top:646px" width="16" height="22" viewBox="0 0 16 22"><rect x="4.500" y="0" width="7" height="13.500" rx="3.500" fill="#4d5054"/><path d="M1.500 8.500v1.500a6.500 6.500 0 0 0 13 0V8.500" stroke="#4d5054" stroke-width="1.500" fill="none"/><path d="M8 16.500v3.500M3.500 20.500h9" stroke="#4d5054" stroke-width="1.500"/></svg>
<svg style="left:336px;top:655px" width="8" height="5" viewBox="0 0 8 5"><path d="M0 5l4-5 4 5z" fill="#55585c"/></svg>
<svg style="left:359px;top:650px" width="22" height="14" viewBox="0 0 22 14"><rect x="0" y="0" width="15.500" height="14" rx="2" fill="#4d5054"/><path d="M16.500 5l5-4v12l-5-4z" fill="#4d5054"/></svg>
<svg style="left:396px;top:655px" width="8" height="5" viewBox="0 0 8 5"><path d="M0 5l4-5 4 5z" fill="#55585c"/></svg>
<svg style="left:419px;top:650px" width="22" height="18" viewBox="0 0 22 18"><rect x=".7" y=".7" width="20.600" height="13" rx="1.500" fill="#3a3d42" stroke="#14c864" stroke-width="1.400"/><path d="M7 16.800h8" stroke="#3a3d42" stroke-width="1.600"/><path d="M7.500 10c.5-2.500 2.500-4 5-4V4l3.500 3.200L12.500 10.500V8.300c-2 0-3.500.5-5 1.700z" fill="#fff"/></svg>
<svg style="left:456px;top:655px" width="8" height="5" viewBox="0 0 8 5"><path d="M0 5l4-5 4 5z" fill="#55585c"/></svg>
<svg style="left:487px;top:647px" width="17" height="20" viewBox="0 0 17 20"><path d="M8.500 0L17 2.800v8c0 4.500-4 7.500-8.500 9.200C4 18.300 0 15.300 0 10.800v-8z" fill="#4d5054"/><path d="M4.800 9.500l3.700-3.300 3.700 3.300M4.800 13.500l3.700-3.300 3.700 3.300" stroke="#fff" stroke-width="1.600" fill="none"/></svg>
<svg style="left:545px;top:648px" width="22" height="19" viewBox="0 0 22 19"><circle cx="9" cy="4.500" r="4.500" fill="#4d5054"/><path d="M0 18c0-5.500 4-8 9-8 2.500 0 4.500.6 6 1.800a6 6 0 0 0-2 6.200z" fill="#4d5054"/><circle cx="16.500" cy="14" r="4.800" fill="#4d5054" stroke="#f9f9f9" stroke-width="1"/><path d="M16.500 11.500v5M14 14h5" stroke="#fff" stroke-width="1.400"/></svg>
<svg style="left:606px;top:648px" width="24" height="19" viewBox="0 0 24 19"><circle cx="14" cy="5" r="4" fill="#7a7d82"/><path d="M6 18c0-5 3.500-7.500 8-7.500s8 2.500 8 7.500z" fill="#7a7d82"/><circle cx="11" cy="4.800" r="4.800" fill="#4d5054"/><path d="M1 18.500c0-6 4.500-8.500 10-8.500s10 2.500 10 8.500z" fill="#4d5054"/></svg>
<svg style="left:671px;top:650px" width="19" height="17" viewBox="0 0 19 17"><path d="M2 0h15a2 2 0 0 1 2 2v9a2 2 0 0 1-2 2h-1.500v4L11 13H2a2 2 0 0 1-2-2V2a2 2 0 0 1 2-2z" fill="#4d5054"/><circle cx="5" cy="6.500" r="1.300" fill="#fff"/><circle cx="9.500" cy="6.500" r="1.300" fill="#fff"/><circle cx="14" cy="6.500" r="1.300" fill="#fff"/></svg>
<svg style="left:724px;top:647px" width="21" height="21" viewBox="0 0 21 21"><circle cx="10.500" cy="10.500" r="9.500" stroke="#4d5054" stroke-width="1.600" fill="none"/><circle cx="10.500" cy="10.500" r="7" fill="#4d5054"/></svg>
<svg style="left:741px;top:642px" width="18" height="18" viewBox="0 0 18 18"><path d="M0 0h17.700v17.700z" fill="#ff8a1f"/><text x="0" y="0" transform="translate(5.200 2.400) rotate(45)" font-size="5.800" font-weight="bold" fill="#fff" font-family="Liberation Sans,sans-serif">NEW</text></svg>
<svg style="left:761px;top:655px" width="8" height="5" viewBox="0 0 8 5"><path d="M0 5l4-5 4 5z" fill="#55585c"/></svg>
<svg style="left:790px;top:647px" width="20" height="20" viewBox="0 0 20 20"><circle cx="10" cy="10" r="10" fill="#4d5054"/><circle cx="6.300" cy="7" r="1.500" fill="#fff"/><circle cx="13.700" cy="7" r="1.500" fill="#fff"/><path d="M3.500 10.500h13a6.500 6.500 0 0 1-13 0z" fill="#fff"/></svg>
<svg style="left:850px;top:654px" width="20" height="5" viewBox="0 0 20 5"><circle cx="2.500" cy="2.500" r="2" fill="#4d5054"/><circle cx="10" cy="2.500" r="2" fill="#4d5054"/><circle cx="17.500" cy="2.500" r="2" fill="#4d5054"/></svg>
<div class="t mb" style="left:300px;top:671px">静音</div>
<div class="t mb" style="left:351px;top:671px">停止视频</div>
<div class="t mb" style="left:411px;top:671px">共享屏幕</div>
<div class="t mb" style="left:486px;top:671px">安全</div>
<div class="t mb" style="left:546px;top:671px">邀请</div>
<div class="t mb" style="left:590px;top:671px">管理成员(18)</div>
<div class="t mb" style="left:671px;top:671px">聊天</div>
<div class="t mb" style="left:725px;top:671px">录制</div>
<div class="t mb" style="left:790px;top:671px">表情</div>
<div class="t mb" style="left:851px;top:671px">更多</div>
<style>.mb{font-size:9.500px;color:#222;letter-spacing:-0.2px}</style>
<div class="abs" style="left:962px;top:648px;width:67px;height:31px;border:1px solid #f28a86;border-radius:3px;background:#fff"></div>
<div class="t" style="left:972px;top:657px;font-size:12px;color:#f04b46;letter-spacing:-0.2px">结束会议</div>
<!-- speaking overlay -->
<div class="abs" style="left:1077px;top:86px;width:194px;height:32px;background:#36383c"></div>
<div class="t" style="left:1088px;top:97px;font-size:10.500px;color:#fff;letter-spacing:0px">正在讲话: 肖景予;</div>
<svg style="left:1196px;top:92px" width="40" height="20" viewBox="0 0 40 20"><path d="M0 17L12 2l8 8 8-9 12 16H27l-4-4-5 4-5-5-5 5z" fill="#4a4c50"/></svg>
</div>
</body>
</html>
